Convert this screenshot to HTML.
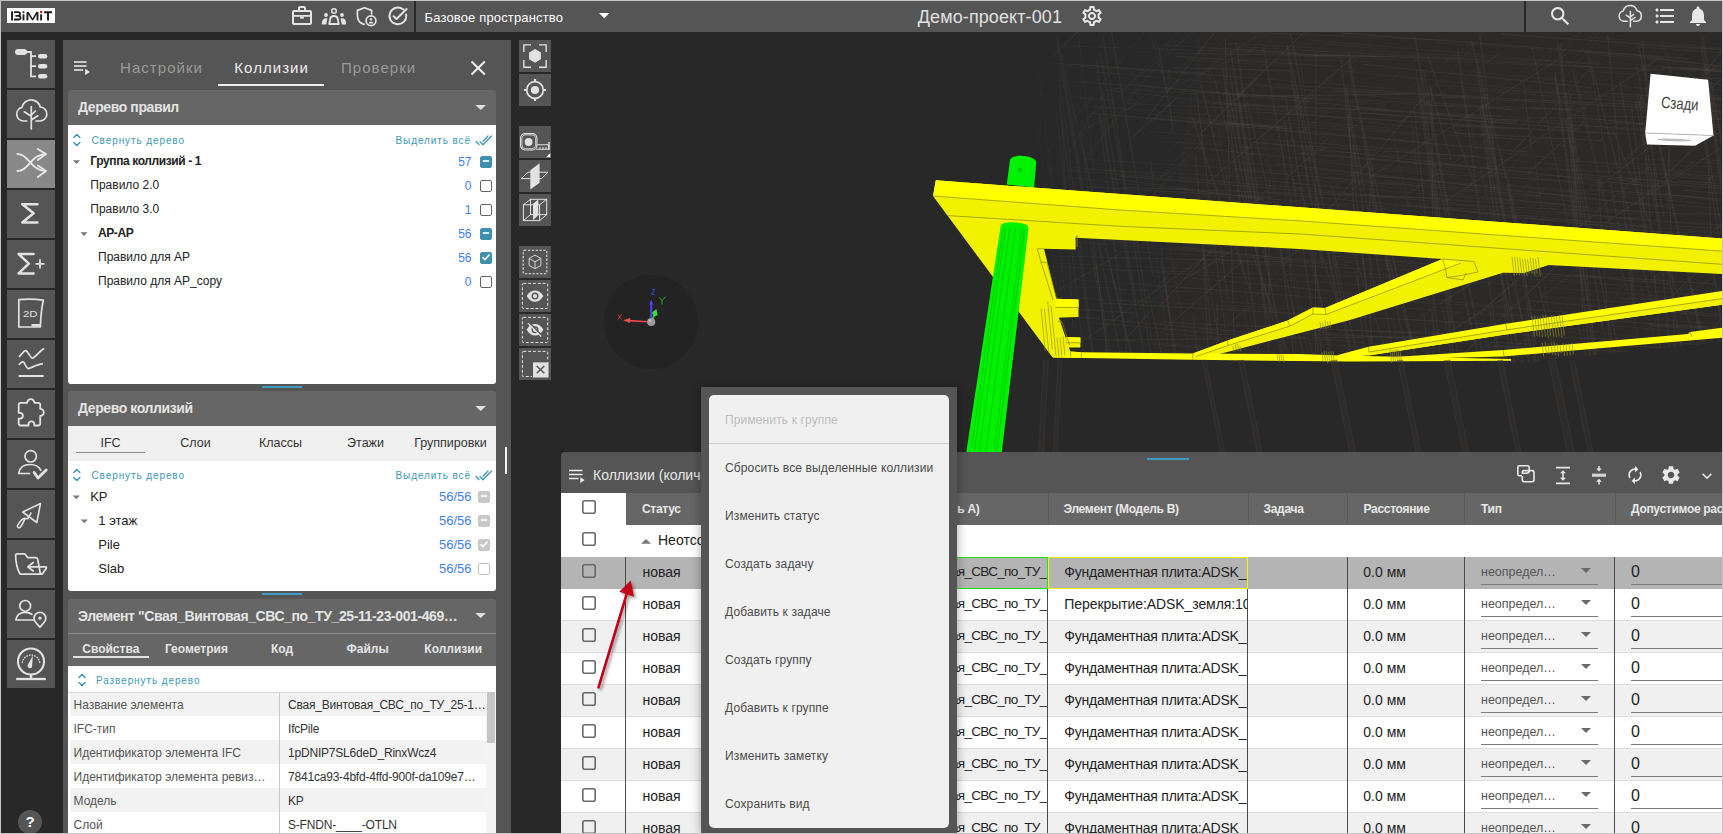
<!DOCTYPE html>
<html lang="ru">
<head>
<meta charset="utf-8">
<title>BIMIT</title>
<style>
*{box-sizing:border-box;margin:0;padding:0}
html,body{width:1723px;height:834px;overflow:hidden;background:#282828}
body{font-family:"Liberation Sans",sans-serif;position:relative;color:#222}
.a{position:absolute}
.t{position:absolute;white-space:nowrap;line-height:1}
svg{position:absolute;overflow:visible}
#frame{position:absolute;left:0;top:0;width:1723px;height:834px;border:1px solid #c4c4c4;z-index:100;pointer-events:none}
/* top bar */
#topbar{left:1px;top:1px;width:1721px;height:31px;background:#555}
.vdiv{background:#282828;width:2px;top:1px;height:31px}
/* sidebar */
.sb{left:7px;width:48px;height:48px;background:#555}
.sb.on{background:#888}
.sb svg{left:0;top:0;width:48px;height:48px}
/* left panel */
#lp{left:63px;top:40px;width:448px;height:794px;background:#555}
.card{left:68px;width:428px;border-radius:3px;overflow:hidden}
.cbody{left:0;width:428px;background:#fff}
.chead{left:0;top:0;width:428px;background:#666}
.ctitle{left:10px;font-weight:bold;font-size:14px;color:#e4e4e4;letter-spacing:-.4px}
.link{font-size:10px;letter-spacing:.9px;color:#3d97b5}
.trow{font-size:12px;color:#222}
.num{font-size:12px;color:#3f80f0;text-align:right}
.cb{width:12px;height:12px;border:1.5px solid #666;border-radius:2px;background:#fff}
.cb.f{background:#3f8fae;border-color:#3f8fae}
.cb.g{background:#c8c8c8;border-color:#c8c8c8}
.cb.l{border-color:#c0c0c0}
/* view toolbar */
.vb{left:519px;width:32px;height:32px;background:#555}
.vb svg{left:0;top:0;width:32px;height:32px}
/* bottom panel */
#bp{left:561px;top:452px;width:1161px;height:382px;background:#555;border-radius:4px 0 0 0;overflow:hidden}
.th{top:41px;height:31px;background:#666;border-right:1px solid #585858}
.tht{font-weight:bold;font-size:12px;color:#e8e8e8}
.row{left:0;width:1161px;height:32px;border-bottom:1px solid #dcdcdc}
.cell{font-size:14px;color:#222}
.cdiv{width:1px;background:#444;top:104px;height:280px}
/* menu */
#menuo{left:701px;top:387px;width:256px;height:447px;background:#555;box-shadow:0 0 10px rgba(0,0,0,.35)}
#menu{left:709px;top:395px;width:240px;height:433px;background:#f0f0f0;border-radius:5px}
.mi{left:16px;font-size:12px;color:#4a4a4a;letter-spacing:.13px}
</style>
</head>
<body>
<div id="topbar" class="a"></div>
<!-- logo -->
<div class="a" style="left:7px;top:8px;width:48px;height:15px;background:#fff"></div>
<svg style="left:7px;top:8px;width:48px;height:15px" viewBox="0 0 48 15">
<g fill="none" stroke="#1c1c1c" stroke-width="1.9" stroke-linejoin="round">
<path d="M5 3.300V12.400"/>
<path d="M7 4.200H11Q13 4.200 13 6T11 7.800H8.400M11 7.800Q13.500 7.800 13.500 9.700T11.200 11.500H7" stroke-width="1.800"/>
<path d="M16.500 6.300V12.400"/>
<path d="M20.400 12.400V4.200" stroke-width="1.900"/><path d="M20.700 4L25.600 11.800L30.200 4" stroke-width="1.500" stroke-linejoin="bevel"/><path d="M30.500 4.200V12.400" stroke-width="1.900"/>
<path d="M34.100 6.300V12.400"/>
<path d="M37.100 4.200H45.100M41 4.200V12.400"/>
</g>
<rect x="15.6" y="3.3" width="1.8" height="1.8" fill="#1c1c1c"/>
<rect x="33" y="3" width="2.2" height="2" fill="#f00"/>
</svg>
<!-- left icons -->
<svg style="left:290px;top:4px;width:24px;height:24px" viewBox="0 0 24 24" fill="#e4e4e4"><path d="M14 6V4h-4v2h4zM4 8v11h16V8H4zm16-2c1.11 0 2 .89 2 2v11c0 1.11-.89 2-2 2H4c-1.11 0-2-.89-2-2l.01-11c0-1.11.88-2 1.99-2h4V4c0-1.11.89-2 2-2h4c1.11 0 2 .89 2 2v2h4z"/><path d="M4 11h16v1.8H4z"/><path d="M10.2 12.5h3.6v2.3h-3.6z"/></svg>
<svg style="left:321px;top:6px;width:26px;height:20px" viewBox="321 6 26 20">
<circle cx="334" cy="11" r="2.3" fill="none" stroke="#e4e4e4" stroke-width="1.5"/>
<path d="M329.2 24L330.4 18.2Q331 16 334 16T337.600 18.2L338.8 24Z" fill="none" stroke="#e4e4e4" stroke-width="1.8" stroke-linejoin="round"/>
<circle cx="326" cy="15" r="1.9" fill="#e4e4e4"/><circle cx="342" cy="15" r="1.9" fill="#e4e4e4"/>
<path d="M321.800 24.6Q322 18.300 325.500 18.300H327.400L326.200 24.600Z" fill="#e4e4e4"/>
<path d="M346.200 24.6Q346 18.300 342.500 18.300H340.600L341.800 24.600Z" fill="#e4e4e4"/>
</svg>
<svg style="left:355px;top:5px;width:24px;height:24px" viewBox="355 5 24 24" fill="none" stroke="#e4e4e4">
<path d="M371.600 14V10.400L364.500 7.700L357.400 10.400V15.500C357.400 20 360.500 23.300 364 24.400" stroke-width="1.7" stroke-linejoin="round" stroke-linecap="round"/>
<circle cx="371" cy="20.700" r="4.900" stroke-width="1.7"/>
<circle cx="371" cy="19.300" r="1.200" fill="#e4e4e4" stroke="none"/>
<path d="M368.600 23.400Q368.800 21.400 371 21.400T373.400 23.400Z" fill="#e4e4e4" stroke="none"/>
</svg>
<svg style="left:387px;top:5px;width:24px;height:24px" viewBox="387 5 24 24" fill="none" stroke="#e4e4e4" stroke-width="1.9" stroke-linecap="round" stroke-linejoin="round">
<path d="M403.300 9.470A8.400 8.400 0 1 0 406.170 14.440"/>
<path d="M393.600 16.200L396.500 19L406.600 9"/>
</svg>
<div class="a vdiv" style="left:414px"></div>
<div class="t" id="tSpace" style="left:424.500px;top:10.500px;font-size:13px;color:#fff;letter-spacing:.15px">Базовое пространство</div>
<svg style="left:599px;top:13px;width:10.500px;height:5.300px" viewBox="0 0 10 5"><path d="M0 0H10L5 5Z" fill="#fff"/></svg>
<div class="t" id="tProj" style="left:917.800px;top:7.600px;font-size:18px;color:#e0e0e0;letter-spacing:.1px">Демо-проект-001</div>
<svg style="left:1079.500px;top:3.600px;width:24px;height:24px" viewBox="0 0 24 24" fill="#e8e8e8"><path d="M19.43 12.98c.04-.32.07-.64.07-.98 0-.34-.03-.66-.07-.98l2.11-1.650c.19-.15.24-.42.12-.64l-2-3.460c-.09-.16-.26-.25-.44-.25-.06 0-.12.010-.17.030l-2.490 1c-.52-.4-1.080-.73-1.690-.98l-.38-2.650C14.460 2.180 14.250 2 14 2h-4c-.25 0-.46.18-.49.42l-.38 2.650c-.61.25-1.170.59-1.690.98l-2.490-1c-.06-.02-.12-.03-.18-.03-.17 0-.34.090-.43.250l-2 3.460c-.13.22-.07.490.12.640l2.110 1.650c-.04.320-.07.650-.07.980 0 .33.030.66.070.98l-2.110 1.650c-.19.150-.24.420-.12.640l2 3.460c.09.160.26.250.44.250.06 0 .12-.01.17-.03l2.490-1c.52.400 1.080.730 1.690.980l.38 2.650c.03.240.24.420.49.420h4c.25 0 .46-.18.490-.42l.38-2.650c.61-.25 1.170-.59 1.690-.98l2.490 1c.06.020.12.030.18.030.17 0 .34-.09.43-.25l2-3.460c.12-.22.070-.49-.12-.64l-2.110-1.650zm-1.980-1.710c.04.310.05.520.05.730 0 .21-.02.430-.05.730l-.14 1.130.89.700 1.080.84-.7 1.210-1.270-.51-1.040-.42-.9.680c-.43.320-.84.560-1.250.730l-1.060.43-.16 1.130-.2 1.350h-1.400l-.19-1.350-.16-1.130-1.060-.43c-.43-.18-.83-.41-1.230-.71l-.91-.7-1.060.43-1.270.51-.7-1.210 1.080-.84.890-.7-.14-1.130c-.03-.31-.05-.54-.05-.74s.02-.43.050-.73l.14-1.130-.89-.7-1.080-.84.700-1.210 1.270.51 1.040.42.900-.68c.43-.32.840-.56 1.250-.73l1.060-.43.160-1.130.2-1.350h1.390l.19 1.350.16 1.130 1.060.43c.43.180.83.410 1.230.710l.91.700 1.060-.43 1.270-.51.700 1.210-1.070.85-.89.700.14 1.130zM12 8c-2.210 0-4 1.790-4 4s1.790 4 4 4 4-1.790 4-4-1.790-4-4-4zm0 6c-1.100 0-2-.9-2-2s.9-2 2-2 2 .9 2 2-.9 2-2 2z"/></svg>
<div class="a vdiv" style="left:1524px"></div>
<svg style="left:1548px;top:4px;width:24.700px;height:24.700px" viewBox="0 0 24 24" fill="#e8e8e8"><path d="M15.500 14h-.79l-.28-.27C15.410 12.590 16 11.110 16 9.500 16 5.910 13.090 3 9.500 3S3 5.910 3 9.500 5.910 16 9.500 16c1.610 0 3.090-.59 4.230-1.570l.27.280v.79l5 4.990L20.490 19l-4.990-5zm-6 0C7.010 14 5 11.990 5 9.500S7.010 5 9.500 5 14 7.010 14 9.500 11.990 14 9.500 14z"/></svg>
<svg style="left:1616px;top:2px;width:28px;height:28px" viewBox="1616 2 28 28" fill="none" stroke="#e4e4e4" stroke-width="1.500" stroke-linecap="round" stroke-linejoin="round">
<path d="M1627.200 21.200H1624.200A5.200 5.200 0 0 1 1623.300 10.900A7.100 7.100 0 0 1 1637 10.700A5.300 5.300 0 0 1 1636.500 21.200H1633.600"/>
<path d="M1630.400 11.500V26.800M1630.400 18.200L1626.200 15.200M1630.400 17L1633.600 14.400M1630.400 20.600L1635 17.500"/>
</svg>
<svg style="left:1652.500px;top:3.500px;width:24px;height:24px" viewBox="0 0 24 24" fill="#e8e8e8"><path d="M4 10.500c-.83 0-1.500.67-1.500 1.500s.67 1.500 1.500 1.500 1.500-.67 1.500-1.500-.67-1.500-1.500-1.500zm0-6c-.83 0-1.500.67-1.500 1.500S3.170 7.500 4 7.500 5.500 6.830 5.500 6 4.830 4.500 4 4.500zm0 12c-.83 0-1.500.68-1.500 1.500s.68 1.500 1.500 1.500 1.500-.68 1.500-1.500-.67-1.500-1.500-1.500zM7 19h14v-2H7v2zm0-6h14v-2H7v2zm0-8v2h14V5H7z"/></svg>
<svg style="left:1686px;top:3.600px;width:24px;height:24px" viewBox="0 0 24 24" fill="#e8e8e8"><path d="M12 22c1.100 0 2-.9 2-2h-4c0 1.100.89 2 2 2zm6-6v-5c0-3.070-1.640-5.640-4.500-6.320V4c0-.83-.67-1.500-1.500-1.500s-1.500.67-1.500 1.500v.68C7.630 5.360 6 7.920 6 11v5l-2 2v1h16v-1l-2-2z"/></svg>
<!--/TOPBAR-->
<div class="a sb" style="top:40px"><svg viewBox="0 0 48 48"><rect x="8" y="9" width="12" height="6" rx="3" fill="#e2e2e2"/><path d="M19 12H24V36.300H29M24 16.200H29M24 26.200H29" fill="none" stroke="#e2e2e2" stroke-width="1.800"/><rect x="31" y="14" width="9.300" height="4.500" rx="2.250" fill="#e2e2e2"/><rect x="31" y="24" width="9.300" height="4.500" rx="2.250" fill="#e2e2e2"/><rect x="31" y="34" width="9.300" height="4.500" rx="2.250" fill="#e2e2e2"/></svg></div>
<div class="a sb" style="top:90px"><svg viewBox="0 0 48 48"><g fill="none" stroke="#e2e2e2" stroke-width="1.700" stroke-linecap="round" stroke-linejoin="round"><path d="M19.800 31H16.500A6.900 6.900 0 0 1 15 17.400A9.300 9.300 0 0 1 33.200 17A7 7 0 0 1 32.500 31H29"/><path d="M24.300 16.500V39M24.300 26.300L17.200 21.800M24.300 25L28.400 21M24.300 30L30.800 25.700"/></g></svg></div>
<div class="a sb on" style="top:140px"><svg viewBox="0 0 48 48"><g fill="none" stroke="#e6e6e6" stroke-width="1.900" stroke-linecap="round" stroke-linejoin="round"><path d="M10.400 14C22 14 24 31 38.500 31"/><path d="M10.400 31C22 31 24 14.200 38.500 14.200"/><path d="M30.800 9L39 14.100L30.800 20"/><path d="M30.800 25.500L39 31L30.800 37"/></g></svg></div>
<div class="a sb" style="top:190px"><svg viewBox="0 0 48 48"><path d="M30.400 14.300H15.300L26.600 23.300L15.300 32.500H30.400" fill="none" stroke="#e2e2e2" stroke-width="2.600" stroke-linecap="round" stroke-linejoin="round"/></svg></div>
<div class="a sb" style="top:240px"><svg viewBox="0 0 48 48"><path d="M26.600 14H11.600L21.800 23.700L11.600 33.400H26.600" fill="none" stroke="#e2e2e2" stroke-width="2.500" stroke-linecap="round" stroke-linejoin="round"/><path d="M28.500 23.800H37.500M33 19.200V28.400" fill="none" stroke="#e2e2e2" stroke-width="1.800"/></svg></div>
<div class="a sb" style="top:290px"><svg viewBox="0 0 48 48"><path d="M11.800 9.600Q24 8.400 36.300 10.200Q33.800 22 33.400 37H11.800Z" fill="none" stroke="#e2e2e2" stroke-width="1.700" stroke-linejoin="round"/><path d="M24.500 35.200H33" stroke="#e2e2e2" stroke-width="2.400" fill="none"/><text x="16" y="27" font-family="Liberation Sans, sans-serif" font-size="9.500" fill="#e2e2e2" textLength="14.500" lengthAdjust="spacingAndGlyphs">2D</text></svg></div>
<div class="a sb" style="top:340px"><svg viewBox="0 0 48 48"><g fill="none" stroke="#e2e2e2" stroke-linecap="round" stroke-linejoin="round"><path d="M12.400 16.400C15 14 17 10 19 10.600S23.500 18.500 25.500 18.200S33 11 36.600 8.800" stroke-width="1.700"/><path d="M12.400 24.300C14 22 15.500 21.500 16.500 22S19.500 28.800 21.500 28.600S30 24.300 35.300 23.900" stroke-width="1.700"/><path d="M12.400 36H35.800" stroke-width="2.200"/></g></svg></div>
<div class="a sb" style="top:390px"><svg viewBox="0 0 48 48"><path d="M20.200 12.800A3.600 3.600 0 1 1 27.400 12.800H31.300Q33.200 12.800 33.200 14.700V18.800A3.600 3.600 0 1 1 33.200 26V33.600Q33.200 35.500 31.300 35.500H27.300V34.200A2.900 2.900 0 0 0 21.500 34.200V35.500H13.600Q11.700 35.500 11.700 33.600V28.600H13A2.900 2.900 0 0 0 13 22.800H11.700V14.700Q11.700 12.800 13.600 12.800Z" fill="none" stroke="#e2e2e2" stroke-width="1.800" stroke-linejoin="round"/></svg></div>
<div class="a sb" style="top:440px"><svg viewBox="0 0 48 48"><g fill="none" stroke="#e2e2e2" stroke-linecap="round" stroke-linejoin="round"><circle cx="23.700" cy="16.300" r="5.700" stroke-width="1.700"/><path d="M22.500 33.500H11.600C12.500 27.500 17 24.500 23 24.500C28 24.500 32 26.500 33.800 30.200" stroke-width="1.700"/><path d="M27.200 32.500L31 38L39.200 30" stroke-width="2.800"/></g></svg></div>
<div class="a sb" style="top:490px"><svg viewBox="0 0 48 48"><g fill="none" stroke="#e2e2e2" stroke-width="1.600" stroke-linecap="round" stroke-linejoin="round"><path d="M33.500 13.500L15.700 22L29.800 32.500Z"/><path d="M24 23L20.800 28.600H17.500"/><path d="M17.500 28.300C15 29 12 33 10.600 35.300C9.800 37 12 38.600 13.300 37.200C15 35 17.600 31.500 17.500 28.300Z"/></g></svg></div>
<div class="a sb" style="top:540px"><svg viewBox="0 0 48 48"><g fill="none" stroke="#e2e2e2" stroke-width="1.700" stroke-linecap="round" stroke-linejoin="round"><path d="M13.300 34.100C10 30 8.600 20 8.600 15.500Q8.600 13.800 10.300 13.800H16.800Q18 13.800 18.600 14.800L20.600 17.600H28.800Q30.300 17.600 30.600 19L33.200 33L34.700 34.100Z"/><path d="M32.500 26.800H38.500Q40 26.800 39.300 28.200L35.700 33.400Q35.200 34.100 34.700 34.100"/><path d="M32.500 26.800H21M26.200 22.500L20.800 26.800L26.200 31"/></g></svg></div>
<div class="a sb" style="top:590px"><svg viewBox="0 0 48 48"><g fill="none" stroke="#e2e2e2" stroke-width="1.700" stroke-linecap="round" stroke-linejoin="round"><circle cx="18.200" cy="15.900" r="5.400"/><path d="M26.200 30H8.800C9.500 25 13.500 22.300 18 22.300C21 22.300 23.300 23 25 24.300"/><path d="M32.900 37.200C29.500 33.600 27 31.200 27 28.200A5.900 5.900 0 0 1 38.800 28.200C38.800 31.200 36.300 33.600 32.900 37.200Z"/></g><circle cx="32.900" cy="28.200" r="1.600" fill="#e2e2e2"/></svg></div>
<div class="a sb" style="top:640px"><svg viewBox="0 0 48 48"><g fill="none" stroke="#e2e2e2" stroke-linecap="round"><circle cx="24" cy="21.500" r="13" stroke-width="2.100"/><path d="M15.300 22.500A8.800 8.800 0 0 1 32.700 22.500" stroke-width="1.300" stroke-dasharray="0.600 2.100"/><path d="M24 34.500V38" stroke-width="2.500" stroke-linecap="butt"/><path d="M9.200 39H38.800" stroke-width="2.300" stroke-linecap="butt"/></g><path d="M25.900 15.500L20.400 25.600A2.600 2.600 0 0 0 25 27.200Z" fill="#e2e2e2"/></svg></div>
<div class="a" style="left:18px;top:809.500px;width:24px;height:24px;border-radius:12px;background:#555"></div><div class="t" style="left:18px;top:814px;width:24px;text-align:center;font-size:15px;font-weight:bold;color:#fff">?</div>
<!--/SIDEBAR-->
<div id="lp" class="a"></div>
<div class="a" style="left:504.500px;top:447px;width:2px;height:27px;background:#f0f0f0"></div>
<svg style="left:73px;top:60px;width:18px;height:16px" viewBox="73 60 18 16"><path d="M74 62H86.500M74 66H86.500M74 70H83" stroke="#eee" stroke-width="1.700" fill="none"/><path d="M85.200 68.800V75L89.800 71.900Z" fill="#eee"/></svg>
<div class="t" id="tab1" style="left:120px;top:59.700px;font-size:15px;letter-spacing:1.050px;color:#9a9a9a">Настройки</div>
<div class="t" id="tab2" style="left:234.300px;top:59.700px;font-size:15px;letter-spacing:1.050px;color:#efefef">Коллизии</div>
<div class="t" id="tab3" style="left:341px;top:59.700px;font-size:15px;letter-spacing:1.050px;color:#9a9a9a">Проверки</div>
<div class="a" style="left:218px;top:84px;width:106px;height:2px;background:#eee"></div>
<svg style="left:470px;top:60px;width:16px;height:16px" viewBox="470 60 16 16"><path d="M471.500 61.500L484.800 74.500M484.800 61.500L471.500 74.500" stroke="#eee" stroke-width="2" fill="none"/></svg>
<div class="a card" style="top:90px;height:294px"><div class="a cbody" style="top:34px;height:260px"></div><div class="a chead" style="height:35px"></div>
<div class="t ctitle" id="c1t" style="top:10px">Дерево правил</div></div>
<svg style="left:0;top:0;width:1px;height:1px"><path d="M475.4 105.0H486.0L480.7 110.0Z" fill="#e0e0e0"/></svg>
<svg style="left:0;top:0;width:1px;height:1px"><path d="M73.8 137.5L76.8 134.5L79.8 137.5M73.8 142.5L76.8 145.5L79.8 142.5" fill="none" stroke="#3d97b5" stroke-width="1.500" stroke-linecap="round" stroke-linejoin="round"/></svg>
<div class="t link" id="lk1" style="left:91.500px;top:135.500px">Свернуть дерево</div>
<div class="t link" id="lk2" style="left:395.500px;top:135.500px">Выделить всё</div>
<svg style="left:0;top:0;width:1px;height:1px"><path d="M476 141.5L479 144.5M480 141.7L483 144.7L491.5 136.0M483 141.2L488 136.0" fill="none" stroke="#3d97b5" stroke-width="1.300" stroke-linecap="round" stroke-linejoin="round"/></svg>
<div class="t trow" id="r1_0" style="left:90.3px;top:154.5px;font-weight:bold;letter-spacing:-.4px">Группа коллизий - 1</div>
<div class="t num" style="left:421.500px;width:50px;top:155.5px">57</div>
<div class="a cb f" style="left:480px;top:155.5px"><svg style="left:-1.500px;top:-1.500px;width:12px;height:12px" viewBox="0 0 12 12"><path d="M2.800 6H9.200" stroke="#fff" stroke-width="1.600" fill="none"/></svg></div>
<svg style="left:0;top:0;width:1px;height:1px"><path d="M73.0 160.3H80.0L76.5 164Z" fill="#777"/></svg>
<div class="t trow" id="r1_1" style="left:90.3px;top:178.5px;">Правило 2.0</div>
<div class="t num" style="left:421.500px;width:50px;top:179.5px">0</div>
<div class="a cb" style="left:480px;top:179.5px"></div>
<div class="t trow" id="r1_2" style="left:90.3px;top:202.5px;">Правило 3.0</div>
<div class="t num" style="left:421.500px;width:50px;top:203.5px">1</div>
<div class="a cb" style="left:480px;top:203.5px"></div>
<div class="t trow" id="r1_3" style="left:98px;top:226.5px;font-weight:bold;letter-spacing:-.4px">AP-AP</div>
<div class="t num" style="left:421.500px;width:50px;top:227.5px">56</div>
<div class="a cb f" style="left:480px;top:227.5px"><svg style="left:-1.500px;top:-1.500px;width:12px;height:12px" viewBox="0 0 12 12"><path d="M2.800 6H9.200" stroke="#fff" stroke-width="1.600" fill="none"/></svg></div>
<svg style="left:0;top:0;width:1px;height:1px"><path d="M80.5 232.3H87.5L84 236Z" fill="#777"/></svg>
<div class="t trow" id="r1_4" style="left:98px;top:250.5px;">Правило для AP</div>
<div class="t num" style="left:421.500px;width:50px;top:251.5px">56</div>
<div class="a cb f" style="left:480px;top:251.5px"><svg style="left:-1.500px;top:-1.500px;width:12px;height:12px" viewBox="0 0 12 12"><path d="M2.500 6.200L4.900 8.600L9.600 3.600" stroke="#fff" stroke-width="1.500" fill="none"/></svg></div>
<div class="t trow" id="r1_5" style="left:98px;top:274.5px;">Правило для AP_copy</div>
<div class="t num" style="left:421.500px;width:50px;top:275.5px">0</div>
<div class="a cb" style="left:480px;top:275.5px"></div>
<div class="a" style="left:262px;top:386px;width:40px;height:2px;background:#3f9cc4"></div>
<div class="a card" style="top:391px;height:200px"><div class="a cbody" style="top:34px;height:166px"></div><div class="a chead" style="height:35px"></div>
<div class="t ctitle" id="c2t" style="top:9.800px">Дерево коллизий</div>
<div class="a" style="left:0;top:35px;width:428px;height:35px;background:#f0f0f0"></div></div>
<svg style="left:0;top:0;width:1px;height:1px"><path d="M475.4 406.0H486.0L480.7 411.0Z" fill="#e0e0e0"/></svg>
<div class="t" style="left:68px;width:85px;text-align:center;top:436.500px;font-size:12.500px;color:#333">IFC</div>
<div class="t" style="left:153px;width:85px;text-align:center;top:436.500px;font-size:12.500px;color:#333">Слои</div>
<div class="t" style="left:238px;width:85px;text-align:center;top:436.500px;font-size:12.500px;color:#333">Классы</div>
<div class="t" style="left:323px;width:85px;text-align:center;top:436.500px;font-size:12.500px;color:#333">Этажи</div>
<div class="t" style="left:408px;width:85px;text-align:center;top:436.500px;font-size:12.500px;color:#333">Группировки</div>
<div class="a" style="left:76px;top:451.500px;width:69px;height:1px;background:#8a8a8a"></div>
<svg style="left:0;top:0;width:1px;height:1px"><path d="M73.8 472.5L76.8 469.5L79.8 472.5M73.8 477.5L76.8 480.5L79.8 477.5" fill="none" stroke="#3d97b5" stroke-width="1.500" stroke-linecap="round" stroke-linejoin="round"/></svg>
<div class="t link" style="left:91.500px;top:470.500px">Свернуть дерево</div>
<div class="t link" style="left:395.500px;top:470.500px">Выделить всё</div>
<svg style="left:0;top:0;width:1px;height:1px"><path d="M476 476.5L479 479.5M480 476.7L483 479.7L491.5 471.0M483 476.2L488 471.0" fill="none" stroke="#3d97b5" stroke-width="1.300" stroke-linecap="round" stroke-linejoin="round"/></svg>
<div class="t trow" style="left:90.2px;top:490.2px;font-size:13px">KP</div>
<div class="t num" style="left:411.500px;width:60px;top:490.2px;font-size:13px">56/56</div>
<div class="a cb g" style="left:478px;top:490.7px"><svg style="left:-1.500px;top:-1.500px;width:12px;height:12px" viewBox="0 0 12 12"><path d="M2.800 6H9.200" stroke="#fff" stroke-width="1.600" fill="none"/></svg></div>
<svg style="left:0;top:0;width:1px;height:1px"><path d="M72.8 495.5H79.8L76.3 499.2Z" fill="#777"/></svg>
<div class="t trow" style="left:98.3px;top:514.2px;font-size:13px">1 этаж</div>
<div class="t num" style="left:411.500px;width:60px;top:514.2px;font-size:13px">56/56</div>
<div class="a cb g" style="left:478px;top:514.7px"><svg style="left:-1.500px;top:-1.500px;width:12px;height:12px" viewBox="0 0 12 12"><path d="M2.800 6H9.200" stroke="#fff" stroke-width="1.600" fill="none"/></svg></div>
<svg style="left:0;top:0;width:1px;height:1px"><path d="M80.8 519.5H87.8L84.3 523.2Z" fill="#777"/></svg>
<div class="t trow" style="left:98.3px;top:538.2px;font-size:13px">Pile</div>
<div class="t num" style="left:411.500px;width:60px;top:538.2px;font-size:13px">56/56</div>
<div class="a cb g" style="left:478px;top:538.7px"><svg style="left:-1.500px;top:-1.500px;width:12px;height:12px" viewBox="0 0 12 12"><path d="M2.500 6.200L4.900 8.600L9.600 3.600" stroke="#fff" stroke-width="1.500" fill="none"/></svg></div>
<div class="t trow" style="left:98.3px;top:562.2px;font-size:13px">Slab</div>
<div class="t num" style="left:411.500px;width:60px;top:562.2px;font-size:13px">56/56</div>
<div class="a cb l" style="left:478px;top:562.7px"></div>
<div class="a" style="left:262px;top:593px;width:40px;height:2px;background:#3f9cc4"></div>
<div class="a card" style="top:599px;height:240px"><div class="a cbody" style="top:66px;height:174px"></div><div class="a chead" style="height:67px"></div><div class="a" style="left:0;top:34px;width:428px;height:1px;background:#8c8c8c"></div>
<div class="t ctitle" id="c3t" style="top:9.500px">Элемент "Свая_Винтовая_СВС_по_ТУ_25-11-23-001-469…</div>
<div class="a" style="left:2px;top:93px;width:416px;height:24px;background:#f2f2f2"></div>
<div class="t" style="left:5.500px;top:100px;font-size:12px;color:#555">Название элемента</div>
<div class="t" style="left:220px;top:100px;font-size:12px;color:#333;letter-spacing:-.2px">Свая_Винтовая_СВС_по_ТУ_25-1…</div>
<div class="a" style="left:2px;top:117px;width:416px;height:24px;background:#fff"></div>
<div class="t" style="left:5.500px;top:124px;font-size:12px;color:#555">IFC-тип</div>
<div class="t" style="left:220px;top:124px;font-size:12px;color:#333;letter-spacing:-.2px">IfcPile</div>
<div class="a" style="left:2px;top:141px;width:416px;height:24px;background:#f2f2f2"></div>
<div class="t" style="left:5.500px;top:148px;font-size:12px;color:#555">Идентификатор элемента IFC</div>
<div class="t" style="left:220px;top:148px;font-size:12px;color:#333;letter-spacing:-.2px">1pDNIP7SL6deD_RinxWcz4</div>
<div class="a" style="left:2px;top:165px;width:416px;height:24px;background:#fff"></div>
<div class="t" style="left:5.500px;top:172px;font-size:12px;color:#555">Идентификатор элемента ревиз…</div>
<div class="t" style="left:220px;top:172px;font-size:12px;color:#333;letter-spacing:-.2px">7841ca93-4bfd-4ffd-900f-da109e7…</div>
<div class="a" style="left:2px;top:189px;width:416px;height:24px;background:#f2f2f2"></div>
<div class="t" style="left:5.500px;top:196px;font-size:12px;color:#555">Модель</div>
<div class="t" style="left:220px;top:196px;font-size:12px;color:#333;letter-spacing:-.2px">KP</div>
<div class="a" style="left:2px;top:213px;width:416px;height:24px;background:#fff"></div>
<div class="t" style="left:5.500px;top:220px;font-size:12px;color:#555">Слой</div>
<div class="t" style="left:220px;top:220px;font-size:12px;color:#333;letter-spacing:-.2px">S-FNDN-____-OTLN</div>
<div class="a" style="left:211px;top:93px;width:1px;height:150px;background:#c8c8c8"></div>
<div class="a" style="left:0;top:92.500px;width:428px;height:1px;background:#d8d8d8"></div>
<div class="a" style="left:418px;top:93px;width:10px;height:150px;background:#f4f4f4"></div>
<div class="a" style="left:419px;top:93px;width:8px;height:51px;background:#c4c4c4"></div>
</div>
<svg style="left:0;top:0;width:1px;height:1px"><path d="M475.4 613.0H486.0L480.7 618.0Z" fill="#e0e0e0"/></svg>
<div class="t" style="left:68.0px;width:85.600px;text-align:center;top:642.500px;font-size:12px;font-weight:bold;color:#e4e4e4">Свойства</div>
<div class="t" style="left:153.6px;width:85.600px;text-align:center;top:642.500px;font-size:12px;font-weight:bold;color:#e4e4e4">Геометрия</div>
<div class="t" style="left:239.2px;width:85.600px;text-align:center;top:642.500px;font-size:12px;font-weight:bold;color:#e4e4e4">Код</div>
<div class="t" style="left:324.79999999999995px;width:85.600px;text-align:center;top:642.500px;font-size:12px;font-weight:bold;color:#e4e4e4">Файлы</div>
<div class="t" style="left:410.4px;width:85.600px;text-align:center;top:642.500px;font-size:12px;font-weight:bold;color:#e4e4e4">Коллизии</div>
<div class="a" style="left:73px;top:656px;width:76px;height:1.500px;background:#e0e0e0"></div>
<svg style="left:0;top:0;width:1px;height:1px"><path d="M79 677.5L82 674.5L85 677.5M79 682.5L82 685.5L85 682.5" fill="none" stroke="#3d97b5" stroke-width="1.500" stroke-linecap="round" stroke-linejoin="round"/></svg>
<div class="t link" style="left:96px;top:675.500px">Развернуть дерево</div>
<!--/LEFTPANEL-->
<!--SCENE0--><svg style="left:511px;top:32px;width:1211px;height:422px" viewBox="511 32 1211 422">
<defs><clipPath id="vp"><rect x="511" y="32" width="1211" height="422"/></clipPath><linearGradient id="txfade" gradientUnits="userSpaceOnUse" x1="1010" x2="1090" y1="0" y2="0"><stop offset="0" stop-color="#fff" stop-opacity="0"/><stop offset="1" stop-color="#fff" stop-opacity="1"/></linearGradient><mask id="txm"><polygon points="1027,32 1722,32 1722,342 1520,363 1052,359 1000,190" fill="url(#txfade)"/></mask></defs>
<g clip-path="url(#vp)">
<polygon points="1200,32 1722,32 1722,454 1135,454" fill="#2c2a29" mask="url(#txm)"/>
<g mask="url(#txm)" fill="none" stroke="#857a70">
<path d="M1226.7 81.5L1519.6 110.6M1408 330.4L1544.8 341.9M1303.6 54.9L1396.2 57.3M1663.2 238.8L1931.9 263.7M1404 162.1L1812.5 211.1M1498.5 217.1L1781 231.4M1476.3 172.3L1649.2 180.1M1173.9 91L1514.1 109.7M1402.1 204.3L1776.3 229.4M1082.6 169.1L1414.8 185.2M1653.3 170.3L2057.6 210.6M1238.1 146.9L1476 167.2M1491 244.3L1907.8 269.6M1199.2 158.5L1498.5 188.2M1427.6 193.9L1565.8 204.2M1090.5 113.2L1290.7 128.7M1281.2 123.1L1390.2 129.9M1604.8 123.3L1814.2 130.8M1105.6 89.8L1248.3 105.8M1558.5 160.7L1762 169M1337.1 163.3L1465.1 175.9M1238 49.2L1298 53.3M1375.6 343.3L1655.5 367.4M1104 114.7L1288.5 129.1M1331.9 69.8L1566.4 93.2M1060.1 65.5L1243.1 77.5M1335 259L1580 280.5M1208.7 242.9L1301.1 251M1230.8 105.2L1580.3 147.6M1344.9 271.8L1760 303.9M1691.6 345.2L1882.4 359.2M1083.9 159.4L1399.5 178.2M1454.8 204.7L1849.7 234.8M1168.4 224.4L1321.3 235.5M1106.3 199.5L1479.4 227.8M1039.8 94.7L1114.8 100.4M1681.4 230.8L1812.9 238.1M1316.6 206.9L1547.4 231.9M1645.9 324.8L1778.7 332.2M1096 71.9L1314.3 91M1148.9 131.3L1252.6 139.5M1657.7 243.1L1849 256.4M1153.7 344.4L1356.4 361.5M1114 251L1254.3 257.7M1436.7 200L1519.8 203.8M1680.2 66.4L1834.8 84.1M1228.9 123.5L1576.3 142M1297.7 55.8L1695.2 71.1M1425.7 104.9L1580.8 110.3M1317.6 143.2L1575.7 166.1M1030.2 264.7L1427.2 288.8M1183.3 91.4L1578.5 110.2M1203 196L1326.9 201.8M1562.6 358.2L1635.5 365.6M1215.4 102.6L1357.9 109.3M1582.6 263.8L1871.2 278.2M1585.9 36.7L1870.1 60.4M1301.5 50.2L1600.7 64.3M1419.1 259.2L1495.1 266.1M1226.5 43.3L1603.6 63.3M1249.6 32.4L1446.8 40.1M1173.7 286.6L1266.2 293.5M1100.7 224.5L1302.2 236.3M1625 289.2L1899 309.4M1104.6 269.5L1396.1 277.7M1097.5 203.8L1338.2 224.9M1578.5 223.6L1959.4 243.9M1059.6 45.7L1348.8 55.3M1263.6 180.1L1341.5 188M1652.8 326.5L1745.8 329M1529.5 107.7L1823.4 113.8M1213.1 218.2L1277.2 224.9M1361.6 184.4L1588.3 207.1M1695.3 212.1L1866.7 228.5M1321.3 300.9L1728.3 335.6M1695.8 158.9L2084.5 189.7M1099.2 203.9L1501.3 230.3M1422.4 239.2L1582.4 253.4M1628.4 191.5L1697.1 197.4M1665 255.6L1870.5 269.1M1221.3 307.6L1281.8 310.2M1587.4 71.4L1980.2 93.7M1053.5 335.5L1384.4 363M1584.3 125.7L1980.5 146.7M1679.7 175.1L1852.8 188.4M1384.5 268L1462.1 273.2M1468.2 71.3L1758.4 99.6M1385.3 180.6L1564.5 195.6M1299.2 211.7L1446.5 224.2M1167.4 116.7L1431.1 143.1M1524.8 167.4L1733.6 176.7M1526.5 195.4L1792.6 213M1088.1 197.1L1373.8 220.5M1627.8 158.1L1919.8 174.5M1534.6 295.8L1942.1 324.7M1000.1 160.4L1392.1 197.1M1680.3 67.7L2036.9 87.2M1059.5 286.8L1120 288.1M1162.8 333.7L1454.6 352.8M1369.8 175.5L1703.6 203.2M1000.8 208.3L1418.1 242.5M1671.3 243.4L2048.9 262.7M1020.5 167.1L1313.6 188.4M1591.6 54.1L1828.5 81.3M1218.2 301L1360.9 312.1M1076.3 236.5L1354.1 268.2M1339.5 330.6L1419.8 332.3M1149.1 351.5L1260.1 355.6M1496.9 92.4L1718.3 106.7M1698.3 337.6L1876.6 346.1M1456.7 204.1L1684.7 216.4M1689.5 177.1L1788.1 187.9M1195.9 147.3L1597 194.8M1266.1 284.1L1436 304.2M1061.4 263.3L1191.8 268.8M1255 326.2L1325.7 330.6M1173.6 237.1L1379.1 247.2M1179.9 277.1L1561.8 311.7M1641.5 239.9L2039.5 275.3M1500.9 184.8L1839.5 209.4M1212.3 259L1326.5 267M1229.5 136.8L1419.2 150.5M1023.7 213.3L1199.6 235.1M1185.4 59.6L1279.9 65.6M1164.5 208.6L1501.6 239.6M1545.8 128.4L1706 139.3M1139.4 113.2L1287.2 126.4M1196.9 329.7L1324.2 340.9M1324.7 44.1L1386.1 49.3M1640.1 45.2L1805.5 54.7M1662 66.7L1936.2 82.2M1238 46.5L1657.3 70.5M1260.3 235.7L1348.1 242M1108.2 207.2L1402.2 232.3M1486.8 166.4L1648.6 174M1521.7 321.9L1729 349M1605 358.9L1795.3 374.8M1659.4 174.4L1775.1 187.2M1574.3 165.2L1951.5 185.9M1036.2 78.7L1385.6 104.5M1062.3 236.1L1255.5 246.7M1113.3 88.3L1197.2 94.2M1343.4 296L1750.3 326.2M1271.5 328.6L1554 350.3M1434.7 233.6L1565.1 240.9M1128.1 103.5L1331.8 112.6M1104.6 350.4L1457.5 374M1028.8 216.4L1359.1 255.7M1272.9 181.5L1637.3 211.3M1306.8 39.7L1588.6 63.9M1325.7 178.6L1607.2 204.2M1280.2 54L1469.3 58.7M1064.2 177L1306.5 202.7M1645.5 134.9L1963.8 160.2M1038 197.3L1233.3 213.6M1697.3 272.1L2049.9 295.3M1551.9 337.2L1635.4 339.5M1427.3 114.7L1603.8 119.5M1100.5 196.7L1491.5 209.5M1414.3 234L1559.5 242.4M1112.9 339.1L1416.5 364.2M1118.1 289.4L1219.5 292.8M1617.8 66.3L2034.7 87.9M1185.3 356.9L1452.8 370.5M1231.6 58.7L1374.4 61.6M1649.9 325.8L1973 348.3M1431.2 173.8L1675.5 186.3M1092.4 106.5L1386.8 127.7M1212.6 203.6L1464.3 221.2M1408.5 225.2L1541.9 231.7M1009.9 294.9L1324.2 310.3M1067.1 241.3L1439.7 269.4M1677 50.4L2032.2 66M1416.3 221.7L1692.8 232.7M1632.5 46.4L1883.2 63.1M1449.9 244.4L1659.2 254.1M1210.2 47.9L1589.9 66.7M1458.9 89.5L1877.3 106.5M1162.6 44.7L1343 57.3M1498.2 119.2L1757.4 126.9M1480 332.9L1889.3 354.5M1059.8 198.4L1179.9 213.8M1589.2 98.5L1706.1 108.4M1637.6 79.4L1706.9 85.8M1435.4 85.1L1846.3 113M1061.2 278.5L1348 299.8M1069.9 64.1L1401.6 89.4M1182.8 147.1L1576 183.3M1501 152.7L1675.7 170.2M1432.8 42.2L1641 55.3M1603.6 61.8L1957.6 90.2M1305.2 203.7L1468.6 215.2M1343.6 193.2L1689.8 214.4M1677 226.4L2081.3 240.7M1198.6 102.4L1509.7 123.2M1550.9 238L1738.4 252M1650 324.5L1978 336.5M1528.1 279L1820.2 298M1407.1 203.1L1779.3 217.3M1161.7 141.6L1452.6 158.9M1211.1 262.6L1574.5 277.3M1250.3 80.6L1321.9 395.8M1534.8 159.2L1549.9 271.1M1383.8 231.6L1417.2 525.4M1292.9 176.7L1364.2 491.9M1167.5 239L1198.3 402.1M1531.8 216.5L1572.4 445M1392.5 130.4L1437.3 343.1M1575.8 73.7L1645.1 366.2M1392.6 257.4L1432.2 431.4M1409.7 104.6L1423.1 227.1M1283.2 154L1303.6 472.7M1155 248.2L1168 341.8M1300 197.4L1330.5 364.2M1299.7 54.7L1309.2 126.6M1458.9 75.6L1513.3 308.6M1149.7 31L1167.8 93.9M1169 68.6L1171.7 132.7M1712.6 294.7L1732.8 411.9M1661.3 36.9L1679.5 103M1278 204L1312.8 379M1208.2 70.3L1260.2 374.5M1346.7 86.1L1353.8 214.7M1078.7 36.3L1101.4 245.6M1625.8 224.7L1700.7 524.5M1716.2 91L1728.6 160.3M1643.9 64.7L1680.1 241.8M1037.8 202.7L1059 341.2M1243.3 309L1264.7 397.3M1463 272L1563 565.3M1720.7 316L1739.5 400.3M1604.3 333.1L1603.7 432.1M1634.7 145.2L1697.9 94.6M1518.9 244L1672.5 74.4M1394.5 202.6L1521.8 116.9M1571.4 337.8L1709 243.6M1164.4 92.9L1235.8 30.1M1474.3 208.5L1536 139.6M1529.1 74.5L1580.6 31.6M1326.8 328.7L1444.5 226.9M1337.1 374L1516.5 252.1M1595.9 331.2L1622.1 286.6M1210 195.1L1339.1 70.8M1114.4 120L1201.1 50.2M1135.1 370.3L1313.7 258.3M1409.8 355.8L1541 237.5M1201.4 72.6L1255.5 36.8M1481.6 98.5L1623.3 3.3M1097.6 248.9L1273 77.8M1124.5 102L1196.1 25.8M1541.9 296.9L1622.3 232.3M1456 242.5L1598.9 128.1M1648.2 157.2L1772 81.4M1061.1 166.8L1102.2 96.3M1048.1 172.8L1203.9 4.2M1260.9 164.2L1338.7 102.3M1566.6 110.7L1605 71.8M1340.1 79.8L1416.2 -19.7M1395.3 376.6L1544.7 260.7M1324.2 273.8L1379.2 229.1M1439.5 219.3L1606.2 30.6M1635.2 254.3L1722.3 166.7M1302.2 163L1476.5 40.2M1299.6 156L1421.5 55.3M1436.6 88.1L1595.4 -95M1700.8 254.6L1760.1 182.4M1057.4 142.1L1271.7 40.6M1535.9 197.6L1641.4 102.3M1445.6 172.4L1618.8 -5.9M1274.1 229.6L1453.8 103.5M1451.3 173L1639.4 -4.5M1042.7 157.4L1184.7 -17.4M1650.8 224.6L1706.4 179.5M1146.9 303L1200.1 268.5M1091.9 363.3L1188.4 251.2M1483.4 279.1L1610.6 170.4M1083 121.3L1221.1 10.2M1211.8 343.8L1384.6 155.6M1370.4 313.7L1446 258.6M1155.9 181.3L1189.3 156.3M1118.4 230.8L1203.9 139.9M1484.2 367.6L1593.8 292.5M1170.4 150.7L1233.7 83.7M1230.4 68.1L1392.2 -76.6M1223.9 327.2L1277.4 285M1358.5 314.4L1423.8 248.4M1297 366.7L1364.3 313.4M1384.3 132.7L1499.3 53.6M1102.4 332.6L1246.2 190.9M1647.9 81.8L1837.9 -66.6M1085 159.6L1138.9 87.8M1642 335.6L1687.8 283.9M1160.3 177.3L1306.4 18.4M1489.5 283.8L1542.5 205.4M1150.5 123.4L1227.9 50M1469.3 361.3L1593.9 254.3M1428.9 289.3L1488.3 213.9" stroke-width=".8" opacity=".1"/>
<path d="M1293.4 209.3L1558 231.8M1571.3 91.3L1840.3 105.7M1048.1 62.7L1205 73.2M1008.4 304.6L1133.8 313M1258.5 217.8L1660.2 251.7M1601.4 343.7L1896.5 363.8M1102.6 210.2L1171.8 219.3M1249 105.1L1503.7 116.2M1572.8 274.7L1714.2 283.9M1484.8 345.7L1705.6 354.8M1236.4 190.3L1649.5 226.9M1588.3 189.3L1882.6 210.8M1334.6 90.6L1678.3 106.6M1277.1 163.7L1675.5 207.9M1111.2 357.7L1181 360.9M1102.3 303.1L1514.6 325.4M1656.2 83.1L1911.9 113M1690.6 95.9L2063.8 128.7M1583.9 52L1908.7 84.8M1294.4 333L1534.8 344.2M1120.6 187.3L1441.5 198.4M1043.2 255.8L1294.2 262M1355.4 216.2L1687.5 247.5M1237.4 96.2L1412 94.3M1256.2 142.9L1480.9 156.9M1529 300.9L1893.7 330.5M1573.3 116.8L1686.5 128.1M1360 112.6L1580.3 128.8M1573.2 173.8L1810.6 193.5M1110.3 178.2L1263.6 199.5M1409.9 205.6L1738.3 240.2M1577.4 266.5L1821.9 274.6M1342.5 33.1L1688.7 58.6M1176.5 56.4L1331.8 66.2M1335.3 256.3L1670.3 283.9M1443 97L1718.5 111.1M1340.1 351L1435.6 358.3M1177.2 53.3L1377.7 56.3M1619 298.3L1906 305.3M1451.1 125.9L1528.7 129.1M1089.1 186.9L1272.5 197.4M1182.1 247.2L1349.4 265.8M1667.8 310.4L2040.9 339M1173.9 67.8L1289.5 70.5M1049.2 204L1318.7 219M1015.3 195.4L1317.6 211.2M1297 153.4L1533.7 172.3M1236.6 169.9L1541.3 195.8M1254.1 141.9L1654.9 186.8M1221.5 122.4L1282.7 127.4M1639.5 299.3L1747 306.4M1274.2 84.5L1480.6 96.7M1691.9 350.9L1813.8 361.8M1355.1 107.9L1705.1 135.1M1035.3 229L1392.4 255.2M1606.3 179.3L1759.4 191.5M1419.6 245.7L1552.3 258.1M1556.7 211.8L1639.1 219.3M1682.9 190.3L1761.8 196.9M1454.3 133.1L1603.9 140.7M1092.1 322.5L1255.1 336.8M1676.3 180.6L1923.5 196.1M1573.9 115.2L1863.9 122.8M1130 84.2L1516.3 122.3M1658.6 78.7L1789.9 90.8M1500.8 34.1L1863.9 59.2M1230 110.4L1616 134.1M1645.2 354L2007.8 368.9M1488.3 313.3L1705.3 327M1163.7 322.2L1507.5 336.9M1484.8 239.9L1795.1 259.7M1032.7 312.9L1365.6 343M1623.9 53.6L1993.1 102.5M1661 67.1L1794.7 77.2M1363 64.2L1590.7 87.6M1116.1 339.9L1452.1 336.4M1144.3 118.3L1527.2 151.9M1119.8 354.2L1405.9 377.9M1118.7 175.9L1456 203M1527.8 331.9L1588.2 579.9M1135.6 230.5L1151.9 342.1M1512.2 208L1552.5 439.2M1488.9 228.8L1561.5 516.7M1497.1 225.3L1544.8 401.5M1202.4 244.2L1253.5 541.4M1196.4 89.7L1226.4 341.3M1029.3 153.9L1044.8 326.8M1427.3 55L1475.9 188.3M1717.9 327.5L1726.8 512M1110.8 268.5L1176.9 539.1M1348.6 114.2L1360.6 321.9M1570.1 93.7L1584.5 343.5M1710 237.2L1733 425.9M1060.1 284.9L1094.6 587.5M1480.5 100L1499.9 185.2M1489.3 306.1L1528.4 576M1360 309.7L1384 557.7M1034.4 34.7L1064.9 291.7M1587.6 50.1L1620.3 238M1524.2 220.1L1557.7 367.8M1259.6 269.1L1283.4 477.4M1316.5 197.3L1376.1 474.2M1269.3 178L1269.1 328.1M1704.4 229.5L1756.7 498.3M1573.9 311.1L1632.6 528.5M1315.9 52.2L1315.4 363.4M1572.2 199.9L1592.8 327.9M1423.9 314L1439.8 493.8M1110.5 25.7L1153 276.3M1667.8 137.1L1676.4 398.7M1532.3 47L1577.7 272.2M1030.3 228.2L1060.7 507.3M1692.3 287.2L1723.3 509.4M1354.8 269L1390.1 447.8M1225.3 39.4L1234.8 362.2M1442.5 306.8L1491 580.5M1575.7 167.1L1586 250.2M1299.5 186.7L1339.9 310.4M1354.6 208.6L1371.7 318.3M1274.7 200.6L1295.4 368M1572.7 70L1624.7 285M1431.9 88.3L1433.5 398.2M1319 322.9L1340.5 589.2M1148.2 291.9L1181.6 448.5M1059.1 66.3L1073.1 329.8M1247.4 102.2L1268.5 193.4M1523.5 82.4L1531.8 151.7M1670 143.2L1667.8 209.1M1597.8 172.8L1613.4 401.9M1631.2 105.2L1651.6 275.2M1201 84.5L1237.9 238.5M1330.4 182.5L1392.4 370.4M1150.4 159.3L1187.3 463.3M1214.3 77.8L1281.9 357.5M1554.4 76.1L1576.9 170.5M1083.4 151L1114.3 415.2M1238.8 94.5L1384.5 -43.8M1131.6 137.9L1176.2 98.5M1671.7 296.4L1742.4 229.2M1439.6 303.7L1494.3 270.1M1443.6 335.5L1505 297.3M1355.1 186.9L1565.7 54.7M1701.9 76.6L1774.3 -19M1471.9 319L1649.9 166.3M1463.5 353.7L1592.6 232.4M1600.1 225.7L1770.3 115.9M1668.8 378.6L1734.2 304.1M1126.8 338.7L1153.5 307.6M1512.4 152.2L1592.3 66M1667.7 307.5L1799.7 219.9M1319.3 220.3L1437.6 81.1M1145.2 120.2L1227.3 16.1M1287.4 177.3L1328.3 138.3M1650.1 280.8L1823.9 145.1M1645.7 194.7L1699.2 142.9M1649.1 191.9L1693.3 162.2M1047.3 60.9L1189.6 -74.4M1159.5 306.1L1271.1 184.9M1527.9 173.2L1585.1 121.2M1077.3 345L1215.6 249.2M1202.5 131.3L1256.6 79.3M1622.9 160.7L1806.1 9.2M1205.7 184.7L1355.3 55M1446.4 200.9L1660.2 56.9M1207.9 254.6L1274.9 199.4M1059.6 289.8L1121.2 252.8M1160.7 332.3L1244.3 259.8M1597.1 187.7L1690.8 115.4M1280.1 261.2L1349.1 220.7M1189.5 276.8L1299.2 208.9M1678.1 95.8L1842.6 -31.6" stroke-width="1.100" opacity=".12"/>
<path d="M1217.1 303.3L1217.8 488.5M1506.8 180.2L1543.8 407.9M1035.5 102.3L1063.9 360.1M1195.5 155.5L1211.3 337.8M1091 203.9L1130.3 406.1M1379.6 224.6L1453.5 498.6M1591.9 66.8L1650.7 299.3M1192 116.6L1251.8 296.4M1457.6 47.3L1497.4 346.9M1619.6 79.4L1648.9 259.1M1369.7 192.7L1371.9 485.6M1508.5 179.2L1531.9 317.4M1460 242.8L1503.9 459.5M1369.4 187.1L1431.4 462.9M1353.8 152L1368.3 238.3M1275 226.4L1324.8 450.9M1630.4 252.2L1635.5 316.2M1705.4 98.8L1712.1 263.2M1222.5 65L1260.1 363.1M1263.5 47.2L1300.3 253.4M1160.7 260.1L1211.1 567.5M1192.9 315.2L1215.7 507.1M1216.9 214.3L1227.6 299M1612.3 128.4L1733.7 433.7M1200.5 200.6L1212.1 433.3M1607.7 35.1L1633.1 306.2M1434 161.2L1486.3 391.5M1586.9 312.6L1637.3 609.2M1253 255.5L1290.2 357.6M1158.1 45.4L1173.3 127.6M1429.2 84.7L1450.9 159.4M1610.4 313.2L1653.2 508.6M1057.4 35.8L1120.2 411.2M1056.9 41.8L1116.3 400.6M1056.5 112.5L1095.6 462.7M1058.7 97.8L1106.9 468.4M1057.4 39.9L1149.3 434.9M1062.3 97L1107.1 468.4M1061.5 71.8L1089.2 234.2M1100.1 113.7L1135.4 294.7M1103.1 35.8L1153.2 371.9M1100.6 117.3L1159 434.1M1100.5 54L1130.2 217.3M1096.4 59.3L1120.5 244.6M1102.5 91L1135.5 302.7M1099.3 114.4L1127.5 357.6M1229.6 109.9L1264.4 294.9M1235.8 80.2L1295.6 430.5M1228 90.7L1294.5 395.1M1236 42.1L1268.4 267.9M1230.3 50.2L1257.1 214.3M1234.4 71.4L1258.6 250.3M1229.9 73.2L1267.1 318.4M1284.1 119.3L1335.2 468.2M1285 95.1L1356.2 503.6M1289.9 70.2L1322.6 268.8M1290.5 32.7L1364.7 424M1295.2 89.4L1337.6 303.1M1287 44.2L1310 200M1287.6 48.3L1358.9 362.6M1349.1 113.5L1377 307M1347.9 60.7L1391.8 255.7M1348.9 60.2L1395.7 305.2M1349 53.1L1375.9 211.9M1345.8 87.3L1411.5 452.7M1350.3 75.5L1415.3 352.9M1340.9 58.4L1374.7 363.4M1416 71L1469.9 479.3M1415.1 35.5L1451.7 301.7M1414 106L1453.9 484.8M1423.4 69.4L1463.8 292.3M1419.1 61.8L1470.5 325.3M1422 104.7L1477.8 494.8M1419.3 81.6L1451.4 323.4M1471.3 39.5L1529.4 269.7M1479.9 108.2L1535.2 517.5M1480.5 86.5L1520.4 453.4M1476.3 58.1L1518.1 359.5M1480.4 74.3L1534.4 394.6M1479.6 34.5L1505 233.8M1477.1 71.4L1507.3 241.7M1561 68.6L1615 356.7M1560.8 66.9L1583.5 246.3M1560.6 41.9L1595.2 423.1M1557 40.4L1603 330M1560.6 51.9L1596.1 354.5M1555.4 77.2L1594.1 383.6M1554.9 70.7L1608.3 450.1M1640.6 94.9L1667.8 448.2M1642.7 41L1675.1 413.7M1638.7 47.1L1725.1 447.1M1635.6 100.3L1665.3 263.2M1636.8 64.8L1664 216.5M1637.6 94.3L1682.6 355.4M1644.7 86.7L1732.2 462.1M1704.4 46.8L1769.8 391.9M1698.1 99.2L1747.6 429.2M1698.5 96.9L1768.3 496.8M1702.7 35.8L1740.6 346.5M1703.6 41.9L1756 438.3M1702.1 54.4L1746.2 251.7M1701 42L1722 196.2" stroke-width="1.500" opacity=".1"/>
</g>
<path d="M1006.800 184.600L1009.900 160.500C1010.500 156.500 1016 155.500 1023 155.900C1030 156.300 1036.500 158.500 1036.200 163L1034.100 187.500Z" fill="#00f200"/>
<circle cx="1019.800" cy="170" r="1.400" fill="none" stroke="#009000" stroke-width=".6"/>
<polygon points="933,196 935.8,180.3 1723,238.5 1723,274 1548,265 1536,269 1442.4,259 1300,249 1075.6,237.8 1075.6,249.5 1044,248.8 1056.5,298.7 1059.3,318.8 1067,341.8 1070.3,351.4 1081.3,352.3 1081.3,357.8 1052.6,357.4" fill="#f2f200"/>
<polygon points="935.8,180.3 1723,238.5 1723,251.2 1300,220.9 1120,210 933,196" fill="#ffff00"/>
<polygon points="1442.4,259 1325,308 1313,307.4 1287.7,320.5 1227.6,340.5 1216.3,344.8 1192.8,353.6 1199.7,359.3 1300,333 1350,320 1503,272.8 1524,273 1548,265" fill="#f2f200"/>
<polygon points="1442.4,259 1325,308 1313,307.4 1287.7,320.5 1227.6,340.5 1216.3,344.8 1192.8,353.6 1196,356.5 1228,345.5 1290,326 1313,314 1326,314.5 1461,263" fill="#ffff00"/>
<polygon points="1052.6,357.4 1070.3,351.4 1081.3,352.3 1192.8,353.6 1300,354 1340,355.5 1511,359 1511,360.8 1350,361.6 1192.8,359.8" fill="#ffff00"/>
<polygon points="1723,290.8 1505.7,323.7 1368.6,346.7 1337,355.2 1345,357 1368.6,355.5 1505.7,334.5 1723,304.5" fill="#ffff00"/>
<polygon points="1723,298.5 1505.7,330 1368.6,352 1368.6,355.5 1505.7,334.5 1723,304.5" fill="#f2f200"/>
<polygon points="1723,327.7 1690,332 1688,334 1503,350 1339.6,360.6 1503,356.5 1723,337.7" fill="#ffff00"/>
<polygon points="1055.5,298.7 1078.5,299.6 1078.5,317 1055.5,317.8" fill="#f2f200"/>
<polygon points="1055.5,298.7 1078.5,299.6 1078.5,307.5 1055.5,307.3" fill="#ffff00"/>
<polygon points="1066,337 1080.4,337.5 1080.4,347.6 1068,347.6" fill="#f2f200"/>
<polygon points="1066,337 1080.4,337.5 1080.4,342.8 1067,342.6" fill="#ffff00"/>
<path d="M933 196L1120 210L1300 220.900L1723 251.200M947.800 215.600L1120 226.300L1300 234L1723 264.400M1037.300 248.800L1044 248.800M1037.300 248.800L1041 262L1047 262.500M1041 262L1053 300M1047 262.500L1056.500 298.700M1055.500 307.300L1078.500 307.500M1066 342.600L1080.400 342.800M1059.300 318.800L1062 322L1069.500 345M1062 322L1058 321M1081.300 352.300L1081.300 357.800M1070.300 351.400L1071 357M1075.600 237.800L1077 235.500L1077 247M1196 356.500L1228 345.500L1290 326L1313 314L1326 314.500L1461 263M1325 308L1326 314.500M1313 307.400L1313 314M1287.700 320.500L1290 326M1227.600 340.500L1228 345.500M1442.400 259L1474 261.500L1478 272L1461 275.500L1447 277.500L1445 267ZM1447 277.500L1463 280L1466 273M1505.700 323.700L1507 330M1368.600 346.700L1369 352M1723 298.500L1505.700 330L1368.600 352M1503 350L1504 356.500M1690 332L1692 337M1192.800 353.600L1192.800 359.800" fill="none" stroke="#8a8a00" stroke-width=".7"/>
<path d="M1512 256.8L1514.3 275.9M1514.6 257.1L1516.8 275.2M1517.2 257.4L1519.4 275.6M1519.8 257.6L1521.8 273.9M1522.4 259.1L1524.3 275.1M1525 258.6L1527.1 275.9M1527.6 259.3L1529.3 273.5M1530.2 257.5L1532.2 274M1532.8 258L1535 276.1M1535.4 258.9L1537.2 273.6M1538 257L1540.3 276M1532 316.5L1534.4 336.7M1534.7 315.9L1537.1 336M1537.5 317L1539.8 336.7M1540.2 317.1L1542.6 337.3M1542.9 314.7L1545.5 336.5M1545.6 315.1L1548.4 338.2M1548.4 316.3L1550.7 335.6M1551.1 315L1553.7 336.6M1553.8 315.9L1556.4 337.2M1556.5 315.7L1559.1 336.6M1559.3 314.5L1562 337.2M1562 315.5L1564.4 335.6M1542 342.9L1543.6 356.5M1545 341.6L1546.5 353.9M1548 343.5L1549.3 354.3M1551 342.3L1552.5 355M1554 342.3L1555.6 355.2M1557 343.1L1558.6 356.4M1560 344.5L1561.1 353.6M1563 343.2L1564.5 355.8M1566 344.1L1567.4 355.8M1569 343.4L1570.4 355.4M1572 342.6L1573.4 354.3M1320 321.9L1320.9 329.1M1322.5 322.3L1323.2 328.5M1325 320.4L1326 328.8M1327.5 321.7L1328.3 328M1330 321.4L1330.7 327.6M1322 352.2L1323.1 361.7M1324.2 350.7L1325.5 361.5M1326.4 351.5L1327.8 363.5M1328.6 351.9L1329.8 361.6M1330.8 351.2L1332 361.2M1333 351.5L1334.1 360.9M1390 348.5L1391.8 363.1M1392 349.9L1393.4 361.8M1394 350.2L1395.3 361.4M1396 349L1397.4 360.7M1398 349.4L1399.4 361.4M1400 350.7L1401.4 362.2M1041 308.5L1045.2 350.7M1044.3 308.4L1048.8 352.7M1047.7 301.6L1052.4 349.4M1051 305.6L1056 355.9M1057 337.4L1059 357.1M1060 337.7L1062 357.5M1063 336.3L1065 355.9M1233 346.2L1233.6 351.3M1235.3 344.3L1236.1 350.6M1237.7 344L1238.5 351.3M1240 345.6L1240.7 351.2M1277 353.7L1277.8 360.1M1279 354.3L1279.9 362.1M1281 354.4L1281.7 360.1M1283 354.7L1283.9 362.4" fill="none" stroke="#8f8f28" stroke-width=".8" opacity=".8"/>
<path d="M1046 360L1041 454" stroke="#35312e" stroke-width="5" opacity=".5"/><path d="M1043.5 360L1038.5 454M1048.5 360L1043.5 454" stroke="#453f3a" stroke-width=".6" opacity=".6" fill="none"/><path d="M1060 360L1055 454" stroke="#35312e" stroke-width="4" opacity=".5"/><path d="M1058.0 360L1053.0 454M1062.0 360L1057.0 454" stroke="#453f3a" stroke-width=".6" opacity=".6" fill="none"/><path d="M1204 360L1223 454" stroke="#35312e" stroke-width="4" opacity=".5"/><path d="M1202.0 360L1221.0 454M1206.0 360L1225.0 454" stroke="#453f3a" stroke-width=".6" opacity=".6" fill="none"/><path d="M1241 360L1260 454" stroke="#35312e" stroke-width="5" opacity=".5"/><path d="M1238.5 360L1257.5 454M1243.5 360L1262.5 454" stroke="#453f3a" stroke-width=".6" opacity=".6" fill="none"/><path d="M1334 360L1353 454" stroke="#35312e" stroke-width="6" opacity=".5"/><path d="M1331.0 360L1350.0 454M1337.0 360L1356.0 454" stroke="#453f3a" stroke-width=".6" opacity=".6" fill="none"/><path d="M1400 360L1419 454" stroke="#35312e" stroke-width="5" opacity=".5"/><path d="M1397.5 360L1416.5 454M1402.5 360L1421.5 454" stroke="#453f3a" stroke-width=".6" opacity=".6" fill="none"/><path d="M1447 360L1466 454" stroke="#35312e" stroke-width="6" opacity=".5"/><path d="M1444.0 360L1463.0 454M1450.0 360L1469.0 454" stroke="#453f3a" stroke-width=".6" opacity=".6" fill="none"/><path d="M1500 360L1519 454" stroke="#35312e" stroke-width="5" opacity=".5"/><path d="M1497.5 360L1516.5 454M1502.5 360L1521.5 454" stroke="#453f3a" stroke-width=".6" opacity=".6" fill="none"/><path d="M1552 360L1571 454" stroke="#35312e" stroke-width="7" opacity=".5"/><path d="M1548.5 360L1567.5 454M1555.5 360L1574.5 454" stroke="#453f3a" stroke-width=".6" opacity=".6" fill="none"/><path d="M1572 360L1591 454" stroke="#35312e" stroke-width="5" opacity=".5"/><path d="M1569.5 360L1588.5 454M1574.5 360L1593.5 454" stroke="#453f3a" stroke-width=".6" opacity=".6" fill="none"/>
<path d="M1000.500 227C1001 222.500 1008 222.200 1014.500 222.400C1021 222.600 1028.800 224 1028.500 228.500L1001.600 454H966Z" fill="#00f200"/>
<path d="M1002.9 230L970.6 454M1005.6 228L973.8 454M1009.7 228L978.8 454M1015.4 228L985.6 454M1022.2 228L993.8 454M1024.6 230L996.6 454" fill="none" stroke="#00b400" stroke-width=".6"/>
</g></svg><!--SCENE1-->
<div class="a vb" style="top:40px"><svg viewBox="0 0 32 32"><path d="M4.900 12V4.900H12M20 4.900H27.200V12M27.200 20V27.200H20M12 27.200H4.900V20" fill="none" stroke="#e2e2e2" stroke-width="1.400"/><path d="M16 9.100L21.900 12.500V19.300L16 22.700L10.100 19.300V12.500Z" fill="#e2e2e2"/></svg></div>
<div class="a vb" style="top:74px"><svg viewBox="0 0 32 32"><circle cx="16" cy="16" r="8.300" fill="none" stroke="#e2e2e2" stroke-width="1.700"/><circle cx="16" cy="16" r="4.100" fill="#e2e2e2"/><path d="M16 5V8M16 24V27M5 16H8M24 16H27" stroke="#e2e2e2" stroke-width="2.200" fill="none"/></svg></div>
<div class="a vb" style="top:126px"><svg viewBox="0 0 32 32"><rect x="1.600" y="7.600" width="16.300" height="16.400" rx="4.500" fill="none" stroke="#e2e2e2" stroke-width="1.100"/><rect x="2.900" y="8.900" width="13.700" height="13.800" rx="3.500" fill="none" stroke="#e2e2e2" stroke-width="0.800"/><circle cx="9.600" cy="16" r="3.900" fill="#e2e2e2"/><path d="M18 18.800H29.500V23.300H17" fill="none" stroke="#e2e2e2" stroke-width="1.100"/><path d="M30 16V23.800" stroke="#e2e2e2" stroke-width="1.400"/><path d="M21 21V23.300M24 21V23.300M27 21V23.300" stroke="#e2e2e2" stroke-width="1"/><path d="M31.300 27V31.300H27Z" fill="#fff"/></svg></div>
<div class="a vb" style="top:160px"><svg viewBox="0 0 32 32"><path d="M2.200 18.600L9 12.200H29L22.500 18.600Z" fill="none" stroke="#e2e2e2" stroke-width="1"/><path d="M11.300 10.200L20.600 3.200V22.800L11.300 29.600Z" fill="#e2e2e2"/></svg></div>
<div class="a vb" style="top:194px"><svg viewBox="0 0 32 32"><path d="M14 9.800L19.300 5.600V21L14 26.300Z" fill="#e2e2e2"/><g fill="none" stroke="#e2e2e2" stroke-width="1"><rect x="4.400" y="10.800" width="16.200" height="15.800"/><rect x="11.500" y="5.300" width="16.200" height="15.300"/><path d="M4.400 10.800L11.500 5.300M20.600 10.800L27.700 5.300M4.400 26.600L11.500 20.600M20.600 26.600L27.700 20.600"/></g></svg></div>
<div class="a vb" style="top:246px"><svg viewBox="0 0 32 32"><rect x="4.200" y="4.200" width="23.600" height="23.600" rx="1" fill="none" stroke="#e2e2e2" stroke-width="1.100" stroke-dasharray="2.300 1.500"/><path d="M16 9.100L21.900 12.400V19.500L16 22.600L10.100 19.500V12.400ZM10.100 12.400L16 15.800L21.900 12.400M16 15.800V22.600" fill="none" stroke="#e2e2e2" stroke-width="0.900" stroke-linejoin="round"/></svg></div>
<div class="a vb" style="top:280px"><svg viewBox="0 0 32 32"><rect x="3.400" y="3.400" width="25.300" height="25.100" rx="1" fill="none" stroke="#e2e2e2" stroke-width="1" stroke-dasharray="2.900 1.900"/><path d="M7.600 16.100C10 12 13 10.400 16 10.400S22 12 24.400 16.100C22 20.200 19 21.800 16 21.800S10 20.200 7.600 16.100Z" fill="#e2e2e2"/><circle cx="16" cy="16.100" r="2.800" fill="none" stroke="#555" stroke-width="1.400"/></svg></div>
<div class="a vb" style="top:314px"><svg viewBox="0 0 32 32"><rect x="3.400" y="3.400" width="25.300" height="25.100" rx="1" fill="none" stroke="#e2e2e2" stroke-width="1" stroke-dasharray="2.900 1.900"/><path d="M7.600 16.100C10 12 13 10.400 16 10.400S22 12 24.400 16.100C22 20.200 19 21.800 16 21.800S10 20.200 7.600 16.100Z" fill="#e2e2e2" transform="translate(0 -0.300)"/><circle cx="16" cy="15.800" r="2.800" fill="none" stroke="#555" stroke-width="1.400"/><path d="M10.200 8.600L23.500 22.100" stroke="#555" stroke-width="1.400"/><path d="M8.900 9.100L22.200 22.600" stroke="#e2e2e2" stroke-width="1.300"/></svg></div>
<div class="a vb" style="top:348px"><svg viewBox="0 0 32 32"><rect x="3.400" y="3.400" width="25.300" height="25.100" rx="1" fill="none" stroke="#e2e2e2" stroke-width="1" stroke-dasharray="2.900 1.900"/><rect x="14" y="14.200" width="15.500" height="15.300" fill="#e2e2e2" stroke="#555" stroke-width="0.010"/><rect x="13" y="13.200" width="1" height="16.300" fill="#555"/><rect x="13" y="13.200" width="17" height="1" fill="#555"/><path d="M17.700 17.900L25.300 25.300M25.300 17.900L17.700 25.300" stroke="#555" stroke-width="1.400"/></svg></div>
<div class="a" style="left:604.400px;top:275.100px;width:93.600px;height:93.600px;border-radius:50%;background:#232323"></div>
<svg style="left:600px;top:280px;width:100px;height:60px" viewBox="600 280 100 60">
<path d="M648 321.800L629 320.600" stroke="#e84848" stroke-width="1.600"/><path d="M623.200 320.300L630.200 318L629.800 323Z" fill="#f05050"/>
<path d="M618 314.500L621.500 319.500M621.700 314.300L617.800 319.700" stroke="#e03c3c" stroke-width="0.800"/>
<path d="M651.200 318V303" stroke="#4646ff" stroke-width="2"/><path d="M651.200 299.500L653.200 304.500H649.200Z" fill="#4646ff"/>
<path d="M651.700 289.300H654.700L651.700 294.300H654.900" stroke="#4a4aff" stroke-width="0.800" fill="none"/>
<path d="M652.300 320L654.300 315" stroke="#30d030" stroke-width="1.800"/><path d="M652 312.500L656.400 309L657.600 315.200L654 316.400Z" fill="#35e035"/>
<path d="M659.300 297.300L662 300.800L665.500 296.500M662 300.800V304.700" stroke="#28c828" stroke-width="0.800" fill="none"/>
<circle cx="651.200" cy="322" r="4.100" fill="#9a9a9a"/><circle cx="650" cy="320.800" r="1.200" fill="#c8c8c0"/>
</svg>
<svg style="left:1640px;top:70px;width:80px;height:80px" viewBox="1640 70 80 80">
<path d="M1645.200 132.900L1713.500 135.500L1695 145.700L1647 144.500Z" fill="#fdfdfd"/>
<path d="M1650.600 73.800L1708.100 79.800L1713.500 135.500L1645.200 132.900Z" fill="#fff"/>
<path d="M1645.200 132.900L1713.500 135.500" stroke="#b0b0b0" stroke-width="0.800"/>
<ellipse cx="1674" cy="140" rx="17" ry="1.300" fill="#bbb" transform="rotate(2 1674 140)"/>
<text x="1661" y="109.200" font-family="Liberation Sans, sans-serif" font-size="16.500" fill="#444" textLength="37.500" lengthAdjust="spacingAndGlyphs" transform="rotate(4.500 1680 104)">Сзади</text>
</svg>
<!--/VIEWPORT-->
<div id="bp" class="a"></div>
<div class="a" style="left:1147px;top:458px;width:42px;height:2px;background:#3f9cc4"></div>
<svg style="left:568px;top:468px;width:18px;height:16px" viewBox="568 468 18 16"><path d="M569 470.500H582.500M569 474.500H582.500M569 478.500H578.500" stroke="#eee" stroke-width="1.700" fill="none"/><path d="M580.300 477.200V483L584.600 480.100Z" fill="#eee"/></svg>
<div class="t" style="left:593px;top:467.500px;font-size:14px;color:#e8e8e8">Коллизии (количество: 56)</div>
<svg style="left:1516px;top:464px;width:20px;height:20px" viewBox="1516 464 20 20" fill="none" stroke="#e8e8e8" stroke-width="1.600" stroke-linejoin="round"><path d="M1529.200 470.500V467.300Q1529.200 465.800 1527.700 465.800H1519.300Q1517.800 465.800 1517.800 467.300V474.300Q1517.800 475.800 1519.300 475.800H1522"/><path d="M1522.300 476V479.800Q1522.300 481.700 1524 481.700H1532.300Q1534 481.700 1534 479.800V472.400Q1534 470.600 1532.300 470.600H1524Q1522.300 470.600 1522.300 472.400V473.200H1526.300Q1529.200 473.200 1529.200 470.500" /></svg>
<svg style="left:1555px;top:466px;width:16px;height:19px" viewBox="1555 466 16 19" fill="none" stroke="#e8e8e8"><path d="M1556 467.700H1570M1556 483.300H1570" stroke-width="1.700"/><path d="M1563 471V480" stroke-width="1.500"/><path d="M1560 473.200L1563 470.200L1566 473.200ZM1560 477.800L1563 480.800L1566 477.800Z" fill="#e8e8e8" stroke="none"/></svg>
<svg style="left:1591px;top:465px;width:16px;height:20px" viewBox="1591 465 16 20" fill="none" stroke="#e8e8e8"><path d="M1592 475.200H1606" stroke-width="3.200" stroke="#d4d4d4"/><path d="M1599 466V470M1599 480.500V484.500" stroke-width="1.500"/><path d="M1596.200 468.600L1599 471.600L1601.800 468.600ZM1596.200 481.800L1599 478.800L1601.800 481.800Z" fill="#e8e8e8" stroke="none"/></svg>
<svg style="left:1625px;top:465px;width:20px;height:20px" viewBox="0 0 24 24" fill="#e8e8e8"><path d="M12 6v3l4-4-4-4v3c-4.420 0-8 3.580-8 8 0 1.570.46 3.030 1.240 4.260L6.700 14.800c-.45-.83-.7-1.790-.7-2.800 0-3.310 2.690-6 6-6zm6.760 1.740L17.300 9.200c.44.840.7 1.790.7 2.800 0 3.310-2.690 6-6 6v-3l-4 4 4 4v-3c4.420 0 8-3.580 8-8 0-1.570-.46-3.030-1.240-4.260z"/></svg>
<svg style="left:1660px;top:464px;width:22px;height:22px" viewBox="0 0 24 24" fill="#e8e8e8"><path d="M19.140 12.940c.04-.3.060-.61.060-.94 0-.32-.02-.64-.07-.94l2.030-1.580c.18-.14.230-.41.120-.61l-1.920-3.320c-.12-.22-.37-.29-.59-.22l-2.390.96c-.5-.38-1.030-.7-1.620-.94l-.36-2.540c-.04-.24-.24-.41-.48-.41h-3.840c-.24 0-.43.170-.47.410l-.36 2.540c-.59.240-1.130.57-1.620.94l-2.390-.96c-.22-.08-.47 0-.59.220L2.740 8.870c-.12.210-.08.470.12.610l2.030 1.580c-.05.300-.09.630-.09.940s.02.640.07.940l-2.030 1.580c-.18.140-.23.410-.12.610l1.920 3.320c.12.220.37.290.59.220l2.390-.96c.5.380 1.030.7 1.620.94l.36 2.540c.05.240.24.410.48.410h3.840c.24 0 .44-.17.470-.41l.36-2.540c.59-.24 1.130-.56 1.620-.94l2.390.96c.22.080.47 0 .59-.22l1.920-3.320c.12-.22.070-.47-.12-.61l-2.010-1.580zM12 15.600c-1.980 0-3.600-1.620-3.600-3.600s1.620-3.600 3.600-3.600 3.600 1.620 3.600 3.600-1.620 3.600-3.600 3.600z"/></svg>
<svg style="left:1697px;top:465.500px;width:20px;height:20px" viewBox="0 0 24 24" fill="#e8e8e8"><path d="M7.410 8.590L12 13.170l4.590-4.580L18 10l-6 6-6-6 1.410-1.410z"/></svg>
<div class="a" style="left:561px;top:493px;width:65px;height:31.500px;background:#fff"></div>
<div class="a" style="left:626px;top:493px;width:1096px;height:31.500px;background:#666"></div>
<div class="a" style="left:1047.5px;top:493px;width:1px;height:31.500px;background:#5a5a5a"></div>
<div class="a" style="left:1247.5px;top:493px;width:1px;height:31.500px;background:#5a5a5a"></div>
<div class="a" style="left:1347px;top:493px;width:1px;height:31.500px;background:#5a5a5a"></div>
<div class="a" style="left:1464px;top:493px;width:1px;height:31.500px;background:#5a5a5a"></div>
<div class="a" style="left:1614.5px;top:493px;width:1px;height:31.500px;background:#5a5a5a"></div>
<div class="t tht" style="left:642px;top:502.500px;letter-spacing:-.3px">Статус</div>
<div class="t tht" style="left:1063.5px;top:502.500px;letter-spacing:-.3px">Элемент (Модель B)</div>
<div class="t tht" style="left:1263.5px;top:502.500px;letter-spacing:-.3px">Задача</div>
<div class="t tht" style="left:1363.5px;top:502.500px;letter-spacing:-.3px">Расстояние</div>
<div class="t tht" style="left:1481px;top:502.500px;letter-spacing:-.3px">Тип</div>
<div class="t tht" style="left:1631px;top:502.500px;letter-spacing:-.3px">Допустимое расстояние</div>
<div class="t tht" style="right:743.500px;top:502.500px;letter-spacing:-.3px">Элемент (Модель A)</div>
<div class="a" style="left:561px;top:524.500px;width:1161px;height:32.200px;background:#fff"></div>
<svg style="left:640px;top:538px;width:12px;height:7px" viewBox="0 0 12 7"><path d="M1 5.800H11L6 1Z" fill="#777"/></svg>
<div class="t cell" style="left:658px;top:532.500px">Неотсортированные</div>
<div class="a" style="left:561px;top:556.7px;width:1161px;height:32px;background:#b4b4b4"></div>
<div class="t cell" style="left:642.500px;top:565.2px">новая</div>
<div class="t cell" style="right:676.500px;top:565.2px;font-size:13.500px;letter-spacing:-.7px">Свая_Винтовая_СВС_по_ТУ_</div>
<div class="a" style="left:1048.500px;top:556.7px;width:198px;height:32px;overflow:hidden"><div class="t cell" style="left:15.800px;top:8.500px;letter-spacing:-.22px">Фундаментная плита:ADSK_</div></div>
<div class="t cell" style="left:1363.300px;top:565.2px">0.0 мм</div>
<div class="t" style="left:1481px;top:565.7px;font-size:12.500px;color:#555">неопредел…</div>
<svg style="left:1581px;top:568.2px;width:10px;height:5px" viewBox="0 0 10 5"><path d="M0 0H10L5 5Z" fill="#6a6a6a"/></svg>
<div class="a" style="left:1481px;top:584.1px;width:117px;height:1px;background:#7a7a7a"></div>
<div class="t" style="left:1631px;top:563.7px;font-size:16px;color:#222">0</div>
<div class="a" style="left:1631px;top:584.1px;width:91px;height:1px;background:#7a7a7a"></div>
<div class="a" style="left:561px;top:588.7px;width:1161px;height:32px;background:#fff"></div>
<div class="a" style="left:561px;top:620.1px;width:1161px;height:1px;background:#dcdcdc"></div>
<div class="t cell" style="left:642.500px;top:597.2px">новая</div>
<div class="t cell" style="right:676.500px;top:597.2px;font-size:13.500px;letter-spacing:-.7px">Свая_Винтовая_СВС_по_ТУ_</div>
<div class="a" style="left:1048.500px;top:588.7px;width:198px;height:32px;overflow:hidden"><div class="t cell" style="left:15.800px;top:8.500px;letter-spacing:-.08px">Перекрытие:ADSK_земля:1000</div></div>
<div class="t cell" style="left:1363.300px;top:597.2px">0.0 мм</div>
<div class="t" style="left:1481px;top:597.7px;font-size:12.500px;color:#555">неопредел…</div>
<svg style="left:1581px;top:600.2px;width:10px;height:5px" viewBox="0 0 10 5"><path d="M0 0H10L5 5Z" fill="#6a6a6a"/></svg>
<div class="a" style="left:1481px;top:616.1px;width:117px;height:1px;background:#7a7a7a"></div>
<div class="t" style="left:1631px;top:595.7px;font-size:16px;color:#222">0</div>
<div class="a" style="left:1631px;top:616.1px;width:91px;height:1px;background:#7a7a7a"></div>
<div class="a" style="left:561px;top:620.7px;width:1161px;height:32px;background:#f0f0f0"></div>
<div class="a" style="left:561px;top:652.1px;width:1161px;height:1px;background:#dcdcdc"></div>
<div class="t cell" style="left:642.500px;top:629.2px">новая</div>
<div class="t cell" style="right:676.500px;top:629.2px;font-size:13.500px;letter-spacing:-.7px">Свая_Винтовая_СВС_по_ТУ_</div>
<div class="a" style="left:1048.500px;top:620.7px;width:198px;height:32px;overflow:hidden"><div class="t cell" style="left:15.800px;top:8.500px;letter-spacing:-.22px">Фундаментная плита:ADSK_</div></div>
<div class="t cell" style="left:1363.300px;top:629.2px">0.0 мм</div>
<div class="t" style="left:1481px;top:629.7px;font-size:12.500px;color:#555">неопредел…</div>
<svg style="left:1581px;top:632.2px;width:10px;height:5px" viewBox="0 0 10 5"><path d="M0 0H10L5 5Z" fill="#6a6a6a"/></svg>
<div class="a" style="left:1481px;top:648.1px;width:117px;height:1px;background:#7a7a7a"></div>
<div class="t" style="left:1631px;top:627.7px;font-size:16px;color:#222">0</div>
<div class="a" style="left:1631px;top:648.1px;width:91px;height:1px;background:#7a7a7a"></div>
<div class="a" style="left:561px;top:652.7px;width:1161px;height:32px;background:#fff"></div>
<div class="a" style="left:561px;top:684.1px;width:1161px;height:1px;background:#dcdcdc"></div>
<div class="t cell" style="left:642.500px;top:661.2px">новая</div>
<div class="t cell" style="right:676.500px;top:661.2px;font-size:13.500px;letter-spacing:-.7px">Свая_Винтовая_СВС_по_ТУ_</div>
<div class="a" style="left:1048.500px;top:652.7px;width:198px;height:32px;overflow:hidden"><div class="t cell" style="left:15.800px;top:8.500px;letter-spacing:-.22px">Фундаментная плита:ADSK_</div></div>
<div class="t cell" style="left:1363.300px;top:661.2px">0.0 мм</div>
<div class="t" style="left:1481px;top:661.7px;font-size:12.500px;color:#555">неопредел…</div>
<svg style="left:1581px;top:664.2px;width:10px;height:5px" viewBox="0 0 10 5"><path d="M0 0H10L5 5Z" fill="#6a6a6a"/></svg>
<div class="a" style="left:1481px;top:680.1px;width:117px;height:1px;background:#7a7a7a"></div>
<div class="t" style="left:1631px;top:659.7px;font-size:16px;color:#222">0</div>
<div class="a" style="left:1631px;top:680.1px;width:91px;height:1px;background:#7a7a7a"></div>
<div class="a" style="left:561px;top:684.7px;width:1161px;height:32px;background:#f0f0f0"></div>
<div class="a" style="left:561px;top:716.1px;width:1161px;height:1px;background:#dcdcdc"></div>
<div class="t cell" style="left:642.500px;top:693.2px">новая</div>
<div class="t cell" style="right:676.500px;top:693.2px;font-size:13.500px;letter-spacing:-.7px">Свая_Винтовая_СВС_по_ТУ_</div>
<div class="a" style="left:1048.500px;top:684.7px;width:198px;height:32px;overflow:hidden"><div class="t cell" style="left:15.800px;top:8.500px;letter-spacing:-.22px">Фундаментная плита:ADSK_</div></div>
<div class="t cell" style="left:1363.300px;top:693.2px">0.0 мм</div>
<div class="t" style="left:1481px;top:693.7px;font-size:12.500px;color:#555">неопредел…</div>
<svg style="left:1581px;top:696.2px;width:10px;height:5px" viewBox="0 0 10 5"><path d="M0 0H10L5 5Z" fill="#6a6a6a"/></svg>
<div class="a" style="left:1481px;top:712.1px;width:117px;height:1px;background:#7a7a7a"></div>
<div class="t" style="left:1631px;top:691.7px;font-size:16px;color:#222">0</div>
<div class="a" style="left:1631px;top:712.1px;width:91px;height:1px;background:#7a7a7a"></div>
<div class="a" style="left:561px;top:716.7px;width:1161px;height:32px;background:#fff"></div>
<div class="a" style="left:561px;top:748.1px;width:1161px;height:1px;background:#dcdcdc"></div>
<div class="t cell" style="left:642.500px;top:725.2px">новая</div>
<div class="t cell" style="right:676.500px;top:725.2px;font-size:13.500px;letter-spacing:-.7px">Свая_Винтовая_СВС_по_ТУ_</div>
<div class="a" style="left:1048.500px;top:716.7px;width:198px;height:32px;overflow:hidden"><div class="t cell" style="left:15.800px;top:8.500px;letter-spacing:-.22px">Фундаментная плита:ADSK_</div></div>
<div class="t cell" style="left:1363.300px;top:725.2px">0.0 мм</div>
<div class="t" style="left:1481px;top:725.7px;font-size:12.500px;color:#555">неопредел…</div>
<svg style="left:1581px;top:728.2px;width:10px;height:5px" viewBox="0 0 10 5"><path d="M0 0H10L5 5Z" fill="#6a6a6a"/></svg>
<div class="a" style="left:1481px;top:744.1px;width:117px;height:1px;background:#7a7a7a"></div>
<div class="t" style="left:1631px;top:723.7px;font-size:16px;color:#222">0</div>
<div class="a" style="left:1631px;top:744.1px;width:91px;height:1px;background:#7a7a7a"></div>
<div class="a" style="left:561px;top:748.7px;width:1161px;height:32px;background:#f0f0f0"></div>
<div class="a" style="left:561px;top:780.1px;width:1161px;height:1px;background:#dcdcdc"></div>
<div class="t cell" style="left:642.500px;top:757.2px">новая</div>
<div class="t cell" style="right:676.500px;top:757.2px;font-size:13.500px;letter-spacing:-.7px">Свая_Винтовая_СВС_по_ТУ_</div>
<div class="a" style="left:1048.500px;top:748.7px;width:198px;height:32px;overflow:hidden"><div class="t cell" style="left:15.800px;top:8.500px;letter-spacing:-.22px">Фундаментная плита:ADSK_</div></div>
<div class="t cell" style="left:1363.300px;top:757.2px">0.0 мм</div>
<div class="t" style="left:1481px;top:757.7px;font-size:12.500px;color:#555">неопредел…</div>
<svg style="left:1581px;top:760.2px;width:10px;height:5px" viewBox="0 0 10 5"><path d="M0 0H10L5 5Z" fill="#6a6a6a"/></svg>
<div class="a" style="left:1481px;top:776.1px;width:117px;height:1px;background:#7a7a7a"></div>
<div class="t" style="left:1631px;top:755.7px;font-size:16px;color:#222">0</div>
<div class="a" style="left:1631px;top:776.1px;width:91px;height:1px;background:#7a7a7a"></div>
<div class="a" style="left:561px;top:780.7px;width:1161px;height:32px;background:#fff"></div>
<div class="a" style="left:561px;top:812.1px;width:1161px;height:1px;background:#dcdcdc"></div>
<div class="t cell" style="left:642.500px;top:789.2px">новая</div>
<div class="t cell" style="right:676.500px;top:789.2px;font-size:13.500px;letter-spacing:-.7px">Свая_Винтовая_СВС_по_ТУ_</div>
<div class="a" style="left:1048.500px;top:780.7px;width:198px;height:32px;overflow:hidden"><div class="t cell" style="left:15.800px;top:8.500px;letter-spacing:-.22px">Фундаментная плита:ADSK_</div></div>
<div class="t cell" style="left:1363.300px;top:789.2px">0.0 мм</div>
<div class="t" style="left:1481px;top:789.7px;font-size:12.500px;color:#555">неопредел…</div>
<svg style="left:1581px;top:792.2px;width:10px;height:5px" viewBox="0 0 10 5"><path d="M0 0H10L5 5Z" fill="#6a6a6a"/></svg>
<div class="a" style="left:1481px;top:808.1px;width:117px;height:1px;background:#7a7a7a"></div>
<div class="t" style="left:1631px;top:787.7px;font-size:16px;color:#222">0</div>
<div class="a" style="left:1631px;top:808.1px;width:91px;height:1px;background:#7a7a7a"></div>
<div class="a" style="left:561px;top:812.7px;width:1161px;height:22px;background:#f0f0f0"></div>
<div class="a" style="left:561px;top:844.1px;width:1161px;height:1px;background:#dcdcdc"></div>
<div class="t cell" style="left:642.500px;top:821.2px">новая</div>
<div class="t cell" style="right:676.500px;top:821.2px;font-size:13.500px;letter-spacing:-.7px">Свая_Винтовая_СВС_по_ТУ_</div>
<div class="a" style="left:1048.500px;top:812.7px;width:198.500px;height:22px;overflow:hidden"><div class="t cell" style="left:15.800px;top:8.500px;letter-spacing:-.22px">Фундаментная плита:ADSK_</div></div>
<div class="t cell" style="left:1363.300px;top:821.2px">0.0 мм</div>
<div class="t" style="left:1481px;top:821.7px;font-size:12.500px;color:#555">неопредел…</div>
<svg style="left:1581px;top:824.2px;width:10px;height:5px" viewBox="0 0 10 5"><path d="M0 0H10L5 5Z" fill="#6a6a6a"/></svg>
<div class="a" style="left:1481px;top:840.1px;width:117px;height:1px;background:#7a7a7a"></div>
<div class="t" style="left:1631px;top:819.7px;font-size:16px;color:#222">0</div>
<div class="a" style="left:1631px;top:840.1px;width:91px;height:1px;background:#7a7a7a"></div>
<div class="a" style="left:625px;top:556.700px;width:1px;height:278px;background:#4a4a4a"></div>
<div class="a" style="left:1047px;top:556.700px;width:1px;height:278px;background:#4a4a4a"></div>
<div class="a" style="left:1247px;top:556.700px;width:1px;height:278px;background:#4a4a4a"></div>
<div class="a" style="left:1347px;top:556.700px;width:1px;height:278px;background:#4a4a4a"></div>
<div class="a" style="left:1464.2px;top:556.700px;width:1px;height:278px;background:#4a4a4a"></div>
<div class="a" style="left:1614.3px;top:556.700px;width:1px;height:278px;background:#4a4a4a"></div>
<div class="a" style="left:850px;top:556.700px;width:198px;height:32.200px;border:1px solid #1ee61e"></div>
<div class="a" style="left:1048px;top:556.700px;width:200px;height:32.200px;border:1px solid #f4f400"></div>
<svg style="left:582px;top:499.7px;width:14px;height:14px" viewBox="0 0 14 14"><rect x=".8" y=".8" width="12.400" height="12.400" rx="2" fill="none" stroke="#686868" stroke-width="1.600"/></svg>
<svg style="left:582px;top:531.7px;width:14px;height:14px" viewBox="0 0 14 14"><rect x=".8" y=".8" width="12.400" height="12.400" rx="2" fill="none" stroke="#686868" stroke-width="1.600"/></svg>
<svg style="left:582px;top:563.5px;width:14px;height:14px" viewBox="0 0 14 14"><rect x=".8" y=".8" width="12.400" height="12.400" rx="2" fill="none" stroke="#686868" stroke-width="1.600"/></svg>
<svg style="left:582px;top:595.5px;width:14px;height:14px" viewBox="0 0 14 14"><rect x=".8" y=".8" width="12.400" height="12.400" rx="2" fill="none" stroke="#686868" stroke-width="1.600"/></svg>
<svg style="left:582px;top:627.5px;width:14px;height:14px" viewBox="0 0 14 14"><rect x=".8" y=".8" width="12.400" height="12.400" rx="2" fill="none" stroke="#686868" stroke-width="1.600"/></svg>
<svg style="left:582px;top:659.5px;width:14px;height:14px" viewBox="0 0 14 14"><rect x=".8" y=".8" width="12.400" height="12.400" rx="2" fill="none" stroke="#686868" stroke-width="1.600"/></svg>
<svg style="left:582px;top:691.5px;width:14px;height:14px" viewBox="0 0 14 14"><rect x=".8" y=".8" width="12.400" height="12.400" rx="2" fill="none" stroke="#686868" stroke-width="1.600"/></svg>
<svg style="left:582px;top:723.5px;width:14px;height:14px" viewBox="0 0 14 14"><rect x=".8" y=".8" width="12.400" height="12.400" rx="2" fill="none" stroke="#686868" stroke-width="1.600"/></svg>
<svg style="left:582px;top:755.5px;width:14px;height:14px" viewBox="0 0 14 14"><rect x=".8" y=".8" width="12.400" height="12.400" rx="2" fill="none" stroke="#686868" stroke-width="1.600"/></svg>
<svg style="left:582px;top:787.5px;width:14px;height:14px" viewBox="0 0 14 14"><rect x=".8" y=".8" width="12.400" height="12.400" rx="2" fill="none" stroke="#686868" stroke-width="1.600"/></svg>
<svg style="left:582px;top:819.5px;width:14px;height:14px" viewBox="0 0 14 14"><rect x=".8" y=".8" width="12.400" height="12.400" rx="2" fill="none" stroke="#686868" stroke-width="1.600"/></svg>
<svg style="left:590px;top:575px;width:50px;height:120px;filter:drop-shadow(2px 2px 1.500px rgba(0,0,0,.4))" viewBox="590 575 50 120"><path d="M598.500 687.300L627 593" stroke="#c40018" stroke-width="2.600" stroke-linecap="round"/><path d="M630.700 580.500L619.300 591.800L634 596.700Z" fill="#c40018"/></svg>
<!--/BOTTOMPANEL-->
<div id="menuo" class="a"></div><div id="menu" class="a">
<div class="a" style="left:0;top:48px;width:240px;height:1px;background:#cfcfcf"></div>
<div class="t mi" id="mi0" style="top:18.5px;color:#bdbdbd;">Применить к группе</div>
<div class="t mi" id="mi1" style="top:66.5px;">Сбросить все выделенные коллизии</div>
<div class="t mi" id="mi2" style="top:114.5px;">Изменить статус</div>
<div class="t mi" id="mi3" style="top:162.5px;">Создать задачу</div>
<div class="t mi" id="mi4" style="top:210.5px;">Добавить к задаче</div>
<div class="t mi" id="mi5" style="top:258.5px;">Создать группу</div>
<div class="t mi" id="mi6" style="top:306.5px;">Добавить к группе</div>
<div class="t mi" id="mi7" style="top:354.5px;">Изменить заметку</div>
<div class="t mi" id="mi8" style="top:402.5px;">Сохранить вид</div>
</div>
<!--/MENU-->
<div id="frame"></div>
</body>
</html>
